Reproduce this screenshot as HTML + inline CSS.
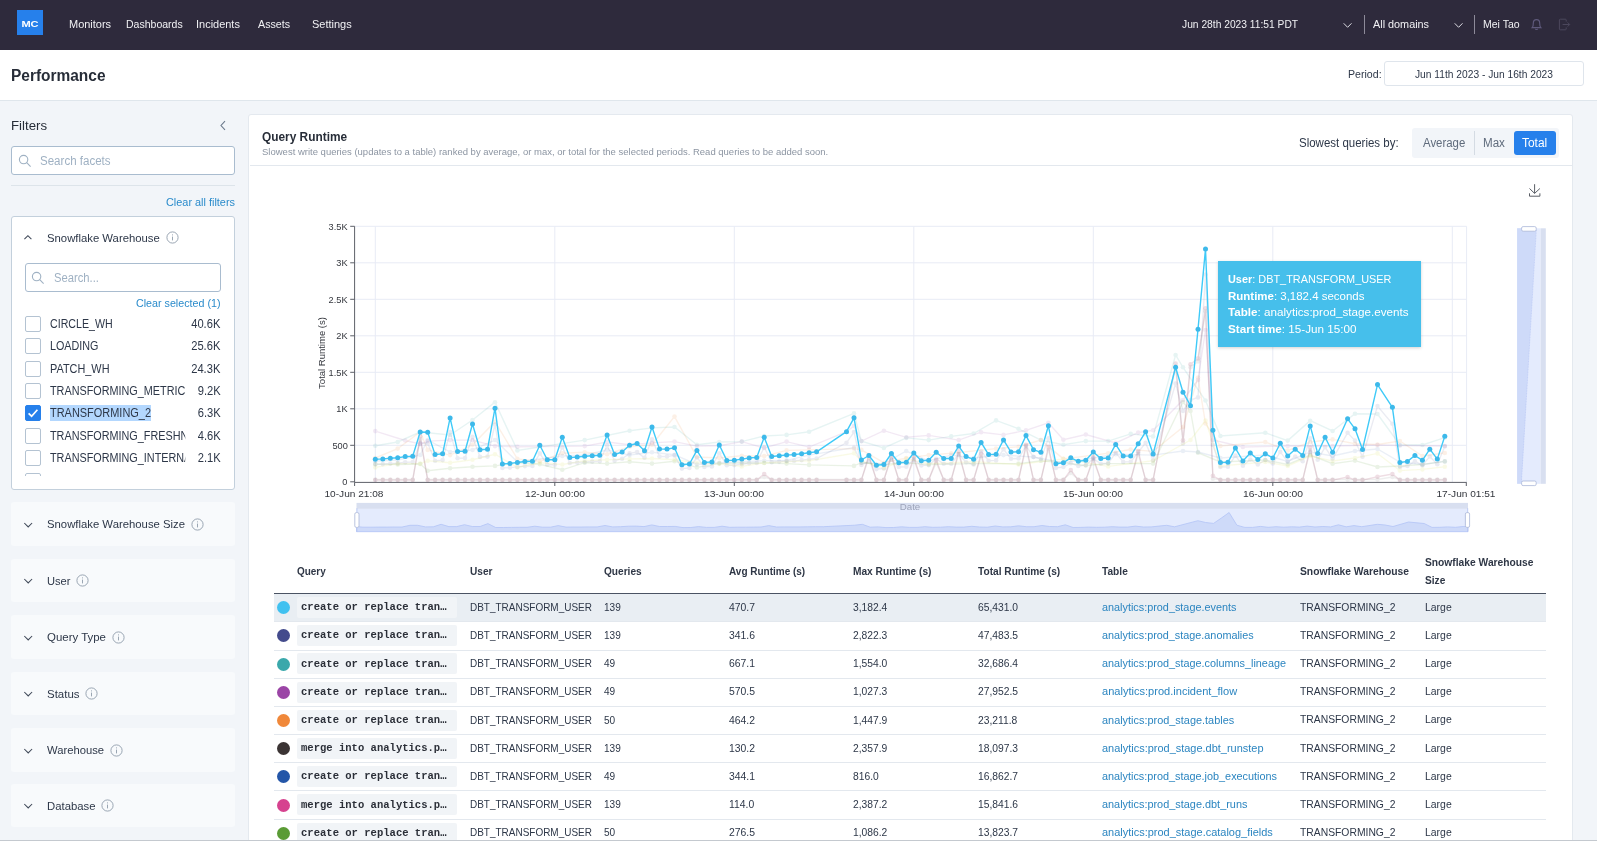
<!DOCTYPE html>
<html><head><meta charset="utf-8"><title>Performance</title>
<style>
*{box-sizing:border-box;margin:0;padding:0}
html,body{width:1597px;height:846px;overflow:hidden;background:#fff;font-family:"Liberation Sans",sans-serif;color:#2d3748}
.abs{position:absolute}
#app{filter:opacity(1);position:absolute;left:0;top:0;width:1597px;height:840.5px;overflow:hidden;background:#f2f5f9;border-bottom:1px solid #c4c9cf}
#nav{position:absolute;left:0;top:0;width:1597px;height:50px;background:#2e2a3c}
#logo{position:absolute;left:17px;top:10px;width:26px;height:25px;background:#2680eb}
#hdr{position:absolute;left:0;top:50px;width:1597px;height:51px;background:#fff;border-bottom:1px solid #dfe6ec}
#side{position:absolute;left:0;top:101px;width:248px;height:739px}
#card{position:absolute;left:248px;top:114px;width:1324.5px;height:740px;background:#fff;border:1px solid #e4e9ef;border-radius:3px}
.t{position:absolute;white-space:nowrap;transform-origin:0 50%}
.t.r{transform-origin:100% 50%}
.t.c{transform-origin:50% 50%}
.b{font-weight:bold}
.inp{position:absolute;background:#fff;border:1px solid #a9bccf;border-radius:3px}
.fc{position:absolute;left:11px;width:224px;height:44px;background:#f8fafc;border-radius:3px}
.cb{position:absolute;left:25px;width:16px;height:16px;background:#fff;border:1px solid #b4c3d2;border-radius:2px}
.clip{position:absolute;overflow:hidden}
.mono{font-family:"Liberation Mono",monospace;font-weight:bold}
.row{position:absolute;left:274px;width:1272px;border-bottom:1px solid #e3e8ee}
.code{position:absolute;left:297px;width:160px;height:21px;background:#f1f4f7;border-radius:2px}
.dot{position:absolute;left:277px;width:13px;height:13px;border-radius:50%}
</style></head><body>
<div id="app">
<div id="nav"></div><div id="logo"></div>
<div class="t c b" style="left: -469.7px; width: 1000px; text-align: center; top: 16.57px; font-size: 9.6px; line-height: 13px; color: rgb(255, 255, 255); transform: scaleX(1.1527);">MC</div>
<div class="t " style="left: 69.4px; top: 16.69px; font-size: 11px; line-height: 15px; color: rgb(241, 241, 244); transform: scaleX(0.9979);">Monitors</div>
<div class="t " style="left: 125.5px; top: 16.69px; font-size: 11px; line-height: 15px; color: rgb(241, 241, 244); transform: scaleX(0.9557);">Dashboards</div>
<div class="t " style="left: 195.5px; top: 16.69px; font-size: 11px; line-height: 15px; color: rgb(241, 241, 244); transform: scaleX(0.997);">Incidents</div>
<div class="t " style="left: 258.4px; top: 16.69px; font-size: 11px; line-height: 15px; color: rgb(241, 241, 244); transform: scaleX(0.9723);">Assets</div>
<div class="t " style="left: 311.5px; top: 16.69px; font-size: 11px; line-height: 15px; color: rgb(241, 241, 244); transform: scaleX(0.9987);">Settings</div>
<div class="t " style="left: 1181.5px; top: 16.69px; font-size: 11px; line-height: 15px; color: rgb(241, 241, 244); transform: scaleX(0.9321);">Jun 28th 2023 11:51 PDT</div>
<div class="t " style="left: 1373px; top: 16.69px; font-size: 11px; line-height: 15px; color: rgb(241, 241, 244); transform: scaleX(0.9849);">All domains</div>
<div class="t " style="left: 1483.4px; top: 16.69px; font-size: 11px; line-height: 15px; color: rgb(241, 241, 244); transform: scaleX(0.9549);">Mei Tao</div>
<svg class="abs" style="left:1342px;top:20px" width="11" height="9" viewBox="0 0 11 9"><path d="M1.7 3.3 L5.6 7.3 L9.5 3.3" fill="none" stroke="#dcdce3" stroke-width="1"></path></svg>
<svg class="abs" style="left:1453px;top:20px" width="11" height="9" viewBox="0 0 11 9"><path d="M1.7 3.3 L5.6 7.3 L9.5 3.3" fill="none" stroke="#dcdce3" stroke-width="1"></path></svg>
<div class="abs" style="left:1364px;top:15px;width:1px;height:19px;background:#8d8a99"></div>
<div class="abs" style="left:1474px;top:15px;width:1px;height:19px;background:#8d8a99"></div>
<svg class="abs" style="left:1531px;top:18px" width="11" height="13" viewBox="0 0 11 13"><path d="M1.2 9.6 C2.3 8.6 2.3 7.4 2.3 5.2 C2.3 3 3.6 1.6 5.5 1.6 C7.4 1.6 8.7 3 8.7 5.2 C8.7 7.4 8.7 8.6 9.8 9.6 Z M4.3 10.9 C4.6 11.7 6.4 11.7 6.7 10.9" fill="none" stroke="#5f5a7c" stroke-width="1.15"></path></svg>
<svg class="abs" style="left:1558px;top:18px" width="13" height="13" viewBox="0 0 13 13"><path d="M8.2 3.6 V2 C8.2 1.5 7.9 1.2 7.4 1.2 H2.2 C1.7 1.2 1.4 1.5 1.4 2 V11 C1.4 11.5 1.7 11.8 2.2 11.8 H7.4 C7.9 11.8 8.2 11.5 8.2 11 V9.4 M4.6 6.5 H11.6 M9.6 4.4 L11.7 6.5 L9.6 8.6" fill="none" stroke="#4b475c" stroke-width="1"></path></svg>
<div id="hdr"></div>
<div class="t b" style="left: 11px; top: 65.06px; font-size: 16px; line-height: 22px; color: rgb(39, 45, 56); transform: scaleX(0.966);">Performance</div>
<div class="t " style="left: 1347.6px; top: 66.96px; font-size: 10.5px; line-height: 15px; color: rgb(45, 55, 72); transform: scaleX(1.0096);">Period:</div>
<div class="inp" style="left:1384px;top:61px;width:200px;height:25px;border-color:#dfe5ec"></div>
<div class="t " style="left: 1415px; top: 66.96px; font-size: 10.5px; line-height: 15px; color: rgb(45, 55, 72); transform: scaleX(0.9741);">Jun 11th 2023 - Jun 16th 2023</div>
<div id="side"></div>
<div class="t " style="left: 11px; top: 116.5px; font-size: 13px; line-height: 18px; color: rgb(39, 45, 56); transform: scaleX(1.0172);">Filters</div>
<svg class="abs" style="left:219px;top:120px" width="8" height="11" viewBox="0 0 8 11"><path d="M6 1.2 L2 5.5 L6 9.8" fill="none" stroke="#6b7a8c" stroke-width="1.1"></path></svg>
<div class="inp" style="left:11px;top:146px;width:224px;height:29px"></div>
<svg class="abs" style="left:18px;top:154px" width="14" height="14" viewBox="0 0 14 14"><circle cx="5.6" cy="5.6" r="4.2" fill="none" stroke="#9fb1c3" stroke-width="1.1"></circle><path d="M8.7 8.7 L12.6 12.6" stroke="#9fb1c3" stroke-width="1.1"></path></svg>
<div class="t " style="left: 40.4px; top: 152.94px; font-size: 12px; line-height: 17px; color: rgb(159, 177, 195); transform: scaleX(0.9622);">Search facets</div>
<div class="abs" style="left:11px;top:185px;width:224px;height:1px;background:#dde4ea"></div>
<div class="t " style="left: 165.5px; top: 195.29px; font-size: 11px; line-height: 15px; color: rgb(42, 139, 203); transform: scaleX(0.9901);">Clear all filters</div>
<div class="abs" style="left:11px;top:216px;width:224px;height:274px;background:#fff;border:1px solid #c3d0dc;border-radius:3px"></div>
<svg class="abs" style="left:23px;top:234px" width="10" height="7" viewBox="0 0 10 7"><path d="M1.4 5.2 L4.9 1.7 L8.4 5.2" fill="none" stroke="#3f4858" stroke-width="1.05"></path></svg>
<div class="t " style="left: 47.2px; top: 230.02px; font-size: 11.5px; line-height: 16px; color: rgb(45, 55, 72); transform: scaleX(0.9839);">Snowflake Warehouse</div>
<svg class="abs" style="left:165.8px;top:231.4px" width="13" height="13" viewBox="0 0 13 13"><circle cx="6.5" cy="6.5" r="5.6" fill="none" stroke="#8f9caa" stroke-width="0.9"></circle><path d="M6.5 5.6 V9.4 M6.5 3.4 V4.4" stroke="#8f9caa" stroke-width="0.9"></path></svg>
<div class="inp" style="left:25px;top:263px;width:196px;height:29px"></div>
<svg class="abs" style="left:31px;top:271px" width="14" height="14" viewBox="0 0 14 14"><circle cx="5.6" cy="5.6" r="4.2" fill="none" stroke="#9fb1c3" stroke-width="1.1"></circle><path d="M8.7 8.7 L12.6 12.6" stroke="#9fb1c3" stroke-width="1.1"></path></svg>
<div class="t " style="left: 54.4px; top: 269.94px; font-size: 12px; line-height: 17px; color: rgb(159, 177, 195); transform: scaleX(0.9369);">Search...</div>
<div class="t " style="left: 135.7px; top: 295.69px; font-size: 11px; line-height: 15px; color: rgb(42, 139, 203); transform: scaleX(0.9732);">Clear selected (1)</div>
<div class="cb" style="top:316px"></div>
<div class="t " style="left: 50.3px; top: 316.34px; font-size: 12px; line-height: 17px; color: rgb(45, 55, 72); transform: scaleX(0.8856); width: 152.66px; overflow: hidden;">CIRCLE_WH</div>
<div class="t r " style="right: 1376.3px; top: 316.34px; font-size: 12px; line-height: 17px; color: rgb(45, 55, 72); transform: scaleX(0.93);">40.6K</div>
<div class="cb" style="top:338px"></div>
<div class="t " style="left: 50.3px; top: 338.34px; font-size: 12px; line-height: 17px; color: rgb(45, 55, 72); transform: scaleX(0.896); width: 150.89px; overflow: hidden;">LOADING</div>
<div class="t r " style="right: 1376.3px; top: 338.34px; font-size: 12px; line-height: 17px; color: rgb(45, 55, 72); transform: scaleX(0.93);">25.6K</div>
<div class="cb" style="top:361px"></div>
<div class="t " style="left: 50.3px; top: 361.34px; font-size: 12px; line-height: 17px; color: rgb(45, 55, 72); transform: scaleX(0.9075); width: 148.98px; overflow: hidden;">PATCH_WH</div>
<div class="t r " style="right: 1376.3px; top: 361.34px; font-size: 12px; line-height: 17px; color: rgb(45, 55, 72); transform: scaleX(0.93);">24.3K</div>
<div class="cb" style="top:383px"></div>
<div class="t " style="left: 50.3px; top: 383.34px; font-size: 12px; line-height: 17px; color: rgb(45, 55, 72); transform: scaleX(0.902); width: 149.89px; overflow: hidden;">TRANSFORMING_METRICS</div>
<div class="t r " style="right: 1376.3px; top: 383.34px; font-size: 12px; line-height: 17px; color: rgb(45, 55, 72); transform: scaleX(0.93);">9.2K</div>
<div class="cb" style="top:405px;background:#2680eb;border-color:#2680eb"></div><svg class="abs" style="left:25px;top:405px" width="16" height="16" viewBox="0 0 16 16"><path d="M3.6 8.3 L6.6 11.2 L12.4 4.8" fill="none" stroke="#fff" stroke-width="1.7"></path></svg>
<div class="abs" style="left:50px;top:405.2px;width:101px;height:15.5px;background:#b3d7fe"></div>
<div class="t " style="left: 50.3px; top: 405.34px; font-size: 12px; line-height: 17px; color: rgb(45, 55, 72); transform: scaleX(0.9125); width: 148.16px; overflow: hidden;">TRANSFORMING_2</div>
<div class="t r " style="right: 1376.3px; top: 405.34px; font-size: 12px; line-height: 17px; color: rgb(45, 55, 72); transform: scaleX(0.93);">6.3K</div>
<div class="cb" style="top:428px"></div>
<div class="t " style="left: 50.3px; top: 428.34px; font-size: 12px; line-height: 17px; color: rgb(45, 55, 72); transform: scaleX(0.902); width: 149.89px; overflow: hidden;">TRANSFORMING_FRESHNESS</div>
<div class="t r " style="right: 1376.3px; top: 428.34px; font-size: 12px; line-height: 17px; color: rgb(45, 55, 72); transform: scaleX(0.93);">4.6K</div>
<div class="cb" style="top:450px"></div>
<div class="t " style="left: 50.3px; top: 450.34px; font-size: 12px; line-height: 17px; color: rgb(45, 55, 72); transform: scaleX(0.902); width: 149.89px; overflow: hidden;">TRANSFORMING_INTERNAL</div>
<div class="t r " style="right: 1376.3px; top: 450.34px; font-size: 12px; line-height: 17px; color: rgb(45, 55, 72); transform: scaleX(0.93);">2.1K</div>
<div class="clip" style="left:25px;top:473px;width:16px;height:3.3px"><div class="cb" style="left:0;top:0"></div></div>
<div class="fc" style="top:502px;height:44px"></div>
<svg class="abs" style="left:22.5px;top:520.7px" width="11" height="8" viewBox="0 0 11 8"><path d="M1.3 2 L5.2 5.9 L9.1 2" fill="none" stroke="#3f4858" stroke-width="1.05"></path></svg>
<div class="t " style="left: 47.1px; top: 516.22px; font-size: 11.5px; line-height: 16px; color: rgb(45, 55, 72); transform: scaleX(0.9843);">Snowflake Warehouse Size</div>
<svg class="abs" style="left:190.6px;top:517.5px" width="13" height="13" viewBox="0 0 13 13"><circle cx="6.5" cy="6.5" r="5.6" fill="none" stroke="#8f9caa" stroke-width="0.9"></circle><path d="M6.5 5.6 V9.4 M6.5 3.4 V4.4" stroke="#8f9caa" stroke-width="0.9"></path></svg>
<div class="fc" style="top:559px;height:43px"></div>
<svg class="abs" style="left:22.5px;top:577.2px" width="11" height="8" viewBox="0 0 11 8"><path d="M1.3 2 L5.2 5.9 L9.1 2" fill="none" stroke="#3f4858" stroke-width="1.05"></path></svg>
<div class="t " style="left: 47.1px; top: 572.72px; font-size: 11.5px; line-height: 16px; color: rgb(45, 55, 72); transform: scaleX(0.9678);">User</div>
<svg class="abs" style="left:76.1px;top:574.0px" width="13" height="13" viewBox="0 0 13 13"><circle cx="6.5" cy="6.5" r="5.6" fill="none" stroke="#8f9caa" stroke-width="0.9"></circle><path d="M6.5 5.6 V9.4 M6.5 3.4 V4.4" stroke="#8f9caa" stroke-width="0.9"></path></svg>
<div class="fc" style="top:615px;height:44px"></div>
<svg class="abs" style="left:22.5px;top:633.7px" width="11" height="8" viewBox="0 0 11 8"><path d="M1.3 2 L5.2 5.9 L9.1 2" fill="none" stroke="#3f4858" stroke-width="1.05"></path></svg>
<div class="t " style="left: 47.1px; top: 629.22px; font-size: 11.5px; line-height: 16px; color: rgb(45, 55, 72); transform: scaleX(0.9958);">Query Type</div>
<svg class="abs" style="left:111.6px;top:630.5px" width="13" height="13" viewBox="0 0 13 13"><circle cx="6.5" cy="6.5" r="5.6" fill="none" stroke="#8f9caa" stroke-width="0.9"></circle><path d="M6.5 5.6 V9.4 M6.5 3.4 V4.4" stroke="#8f9caa" stroke-width="0.9"></path></svg>
<div class="fc" style="top:672px;height:43px"></div>
<svg class="abs" style="left:22.5px;top:690.2px" width="11" height="8" viewBox="0 0 11 8"><path d="M1.3 2 L5.2 5.9 L9.1 2" fill="none" stroke="#3f4858" stroke-width="1.05"></path></svg>
<div class="t " style="left: 47.1px; top: 685.72px; font-size: 11.5px; line-height: 16px; color: rgb(45, 55, 72); transform: scaleX(0.9966);">Status</div>
<svg class="abs" style="left:85.1px;top:687.0px" width="13" height="13" viewBox="0 0 13 13"><circle cx="6.5" cy="6.5" r="5.6" fill="none" stroke="#8f9caa" stroke-width="0.9"></circle><path d="M6.5 5.6 V9.4 M6.5 3.4 V4.4" stroke="#8f9caa" stroke-width="0.9"></path></svg>
<div class="fc" style="top:728px;height:44px"></div>
<svg class="abs" style="left:22.5px;top:746.7px" width="11" height="8" viewBox="0 0 11 8"><path d="M1.3 2 L5.2 5.9 L9.1 2" fill="none" stroke="#3f4858" stroke-width="1.05"></path></svg>
<div class="t " style="left: 47.1px; top: 742.22px; font-size: 11.5px; line-height: 16px; color: rgb(45, 55, 72); transform: scaleX(0.9762);">Warehouse</div>
<svg class="abs" style="left:109.6px;top:743.5px" width="13" height="13" viewBox="0 0 13 13"><circle cx="6.5" cy="6.5" r="5.6" fill="none" stroke="#8f9caa" stroke-width="0.9"></circle><path d="M6.5 5.6 V9.4 M6.5 3.4 V4.4" stroke="#8f9caa" stroke-width="0.9"></path></svg>
<div class="fc" style="top:784px;height:43px"></div>
<svg class="abs" style="left:22.5px;top:802.2px" width="11" height="8" viewBox="0 0 11 8"><path d="M1.3 2 L5.2 5.9 L9.1 2" fill="none" stroke="#3f4858" stroke-width="1.05"></path></svg>
<div class="t " style="left: 47.1px; top: 797.72px; font-size: 11.5px; line-height: 16px; color: rgb(45, 55, 72); transform: scaleX(0.9851);">Database</div>
<svg class="abs" style="left:101.1px;top:799.0px" width="13" height="13" viewBox="0 0 13 13"><circle cx="6.5" cy="6.5" r="5.6" fill="none" stroke="#8f9caa" stroke-width="0.9"></circle><path d="M6.5 5.6 V9.4 M6.5 3.4 V4.4" stroke="#8f9caa" stroke-width="0.9"></path></svg>
<div id="card"></div>
<div class="t b" style="left: 262px; top: 127.97px; font-size: 12.5px; line-height: 18px; color: rgb(39, 45, 56); transform: scaleX(0.9497);">Query Runtime</div>
<div class="t " style="left: 262px; top: 145.88px; font-size: 9px; line-height: 13px; color: rgb(140, 149, 162); transform: scaleX(1.0557);">Slowest write queries (updates to a table) ranked by average, or max, or total for the selected periods. Read queries to be added soon.</div>
<div class="abs" style="left:250px;top:165px;width:1322px;height:1px;background:#e3e8ee"></div>
<div class="t " style="left: 1298.9px; top: 134.54px; font-size: 12px; line-height: 17px; color: rgb(45, 55, 72); transform: scaleX(0.9571);">Slowest queries by:</div>
<div class="abs" style="left:1412px;top:128px;width:146.5px;height:29.5px;background:#f2f5f9;border-radius:3px"></div>
<div class="t " style="left: 1423.4px; top: 134.54px; font-size: 12px; line-height: 17px; color: rgb(95, 107, 124); transform: scaleX(0.9509);">Average</div>
<div class="abs" style="left:1474.3px;top:131px;width:1px;height:23.5px;background:#d4dbe3"></div>
<div class="t " style="left: 1483px; top: 134.54px; font-size: 12px; line-height: 17px; color: rgb(95, 107, 124); transform: scaleX(0.966);">Max</div>
<div class="abs" style="left:1513.5px;top:131px;width:42px;height:23.8px;background:#2680eb;border-radius:3px"></div>
<div class="t " style="left: 1522.4px; top: 134.54px; font-size: 12px; line-height: 17px; color: rgb(255, 255, 255); transform: scaleX(0.9937);">Total</div>
<svg class="abs" style="left:1527px;top:183px" width="15" height="15" viewBox="0 0 15 15"><path d="M7.6 1.2 V10.2 M2.5 5.5 L7.6 10.4 L12.9 5.5 M2.5 10.3 V13.2 H12.9 V10.3" fill="none" stroke="#5a5e66" stroke-width="1"></path></svg>
<svg class="abs" style="left:0;top:0" width="1597" height="840" viewBox="0 0 1597 840"><path d="M354.6 226.3 H1466.6" stroke="#e8ecf6" stroke-width="1"></path><path d="M354.6 262.8 H1466.6" stroke="#e8ecf6" stroke-width="1"></path><path d="M354.6 299.3 H1466.6" stroke="#e8ecf6" stroke-width="1"></path><path d="M354.6 335.8 H1466.6" stroke="#e8ecf6" stroke-width="1"></path><path d="M354.6 372.3 H1466.6" stroke="#e8ecf6" stroke-width="1"></path><path d="M354.6 408.8 H1466.6" stroke="#e8ecf6" stroke-width="1"></path><path d="M354.6 445.3 H1466.6" stroke="#e8ecf6" stroke-width="1"></path><path d="M375.3 226.3 V482" stroke="#e8ecf6" stroke-width="1"></path><path d="M554.8 226.3 V482" stroke="#e8ecf6" stroke-width="1"></path><path d="M734.3 226.3 V482" stroke="#e8ecf6" stroke-width="1"></path><path d="M913.8 226.3 V482" stroke="#e8ecf6" stroke-width="1"></path><path d="M1093.3 226.3 V482" stroke="#e8ecf6" stroke-width="1"></path><path d="M1272.8 226.3 V482" stroke="#e8ecf6" stroke-width="1"></path><path d="M1452.3 226.3 V482" stroke="#e8ecf6" stroke-width="1"></path><path d="M1466.6 226.3 V482" stroke="#e8ecf6" stroke-width="1"></path><g opacity="0.16"><path d="M375.3 480.1 L382.8 480.1 L390.3 480.1 L397.7 480.1 L405.2 480.1 L412.7 480.1 L420.2 436.4 L427.7 480.1 L435.1 480.1 L442.6 480.1 L450.1 480.1 L457.6 480.1 L465.0 480.1 L472.5 480.1 L480.0 480.1 L487.5 480.1 L495.0 480.1 L502.4 480.1 L509.9 480.1 L517.4 480.1 L524.9 480.1 L532.4 480.1 L539.8 480.1 L547.3 480.1 L554.8 480.1 L562.3 480.1 L569.8 480.1 L577.2 480.1 L584.7 480.1 L592.2 480.1 L599.7 480.1 L607.1 480.1 L614.6 480.1 L622.1 480.1 L629.6 480.1 L637.1 480.1 L644.5 480.1 L652.0 480.1 L659.5 480.1 L667.0 480.1 L674.5 480.1 L681.9 480.1 L689.4 480.1 L696.9 480.1 L704.4 480.1 L711.9 480.1 L719.3 480.1 L726.8 480.1 L734.3 480.1 L741.8 480.1 L749.2 480.1 L756.7 480.1 L764.2 474.0 L771.7 480.1 L779.2 480.1 L786.6 480.1 L794.1 480.1 L801.6 480.1 L809.1 480.1 L816.6 480.1 L846.5 480.1 L854.0 480.1 L861.4 480.1 L868.9 455.0 L876.4 480.1 L883.9 480.1 L891.4 455.0 L898.8 480.1 L906.3 480.1 L913.8 457.0 L921.3 480.1 L928.7 480.1 L936.2 460.0 L943.7 480.1 L951.2 480.1 L958.7 451.4 L966.1 480.1 L973.6 480.1 L981.1 453.6 L988.6 480.1 L996.1 480.1 L1003.5 480.1 L1011.0 480.1 L1018.5 480.1 L1026.0 444.8 L1033.5 480.1 L1040.9 480.1 L1048.4 446.7 L1055.9 480.1 L1063.4 480.1 L1070.8 470.0 L1078.3 480.1 L1085.8 480.1 L1093.3 457.4 L1100.8 480.1 L1108.2 480.1 L1115.7 480.1 L1123.2 480.1 L1130.7 480.1 L1138.2 451.0 L1145.6 480.1 L1153.1 480.1 L1175.6 363.6 L1183.0 440.4 L1190.5 364.3 L1198.0 358.4 L1205.5 308.3 L1212.9 475.8 L1220.4 480.1 L1227.9 480.1 L1235.4 480.1 L1242.9 480.1 L1250.3 480.1 L1257.8 480.1 L1265.3 480.1 L1272.8 480.1 L1280.3 480.1 L1287.7 480.1 L1295.2 480.1 L1302.7 480.1 L1310.2 447.6 L1317.7 480.1 L1325.1 480.1 L1332.6 480.1 L1347.6 477.0 L1355.0 480.1 L1362.5 480.1 L1377.5 476.7 L1392.4 474.0 L1399.9 480.1 L1407.4 480.1 L1414.9 480.1 L1422.4 480.1 L1429.8 480.1 L1437.3 480.1 L1444.8 480.1" fill="none" stroke="#a0365f" stroke-width="1.4"></path><circle cx="375.3" cy="480.1" r="2.3" fill="#a0365f"></circle><circle cx="382.8" cy="480.1" r="2.3" fill="#a0365f"></circle><circle cx="390.3" cy="480.1" r="2.3" fill="#a0365f"></circle><circle cx="397.7" cy="480.1" r="2.3" fill="#a0365f"></circle><circle cx="405.2" cy="480.1" r="2.3" fill="#a0365f"></circle><circle cx="412.7" cy="480.1" r="2.3" fill="#a0365f"></circle><circle cx="420.2" cy="436.4" r="2.3" fill="#a0365f"></circle><circle cx="427.7" cy="480.1" r="2.3" fill="#a0365f"></circle><circle cx="435.1" cy="480.1" r="2.3" fill="#a0365f"></circle><circle cx="442.6" cy="480.1" r="2.3" fill="#a0365f"></circle><circle cx="450.1" cy="480.1" r="2.3" fill="#a0365f"></circle><circle cx="457.6" cy="480.1" r="2.3" fill="#a0365f"></circle><circle cx="465.0" cy="480.1" r="2.3" fill="#a0365f"></circle><circle cx="472.5" cy="480.1" r="2.3" fill="#a0365f"></circle><circle cx="480.0" cy="480.1" r="2.3" fill="#a0365f"></circle><circle cx="487.5" cy="480.1" r="2.3" fill="#a0365f"></circle><circle cx="495.0" cy="480.1" r="2.3" fill="#a0365f"></circle><circle cx="502.4" cy="480.1" r="2.3" fill="#a0365f"></circle><circle cx="509.9" cy="480.1" r="2.3" fill="#a0365f"></circle><circle cx="517.4" cy="480.1" r="2.3" fill="#a0365f"></circle><circle cx="524.9" cy="480.1" r="2.3" fill="#a0365f"></circle><circle cx="532.4" cy="480.1" r="2.3" fill="#a0365f"></circle><circle cx="539.8" cy="480.1" r="2.3" fill="#a0365f"></circle><circle cx="547.3" cy="480.1" r="2.3" fill="#a0365f"></circle><circle cx="554.8" cy="480.1" r="2.3" fill="#a0365f"></circle><circle cx="562.3" cy="480.1" r="2.3" fill="#a0365f"></circle><circle cx="569.8" cy="480.1" r="2.3" fill="#a0365f"></circle><circle cx="577.2" cy="480.1" r="2.3" fill="#a0365f"></circle><circle cx="584.7" cy="480.1" r="2.3" fill="#a0365f"></circle><circle cx="592.2" cy="480.1" r="2.3" fill="#a0365f"></circle><circle cx="599.7" cy="480.1" r="2.3" fill="#a0365f"></circle><circle cx="607.1" cy="480.1" r="2.3" fill="#a0365f"></circle><circle cx="614.6" cy="480.1" r="2.3" fill="#a0365f"></circle><circle cx="622.1" cy="480.1" r="2.3" fill="#a0365f"></circle><circle cx="629.6" cy="480.1" r="2.3" fill="#a0365f"></circle><circle cx="637.1" cy="480.1" r="2.3" fill="#a0365f"></circle><circle cx="644.5" cy="480.1" r="2.3" fill="#a0365f"></circle><circle cx="652.0" cy="480.1" r="2.3" fill="#a0365f"></circle><circle cx="659.5" cy="480.1" r="2.3" fill="#a0365f"></circle><circle cx="667.0" cy="480.1" r="2.3" fill="#a0365f"></circle><circle cx="674.5" cy="480.1" r="2.3" fill="#a0365f"></circle><circle cx="681.9" cy="480.1" r="2.3" fill="#a0365f"></circle><circle cx="689.4" cy="480.1" r="2.3" fill="#a0365f"></circle><circle cx="696.9" cy="480.1" r="2.3" fill="#a0365f"></circle><circle cx="704.4" cy="480.1" r="2.3" fill="#a0365f"></circle><circle cx="711.9" cy="480.1" r="2.3" fill="#a0365f"></circle><circle cx="719.3" cy="480.1" r="2.3" fill="#a0365f"></circle><circle cx="726.8" cy="480.1" r="2.3" fill="#a0365f"></circle><circle cx="734.3" cy="480.1" r="2.3" fill="#a0365f"></circle><circle cx="741.8" cy="480.1" r="2.3" fill="#a0365f"></circle><circle cx="749.2" cy="480.1" r="2.3" fill="#a0365f"></circle><circle cx="756.7" cy="480.1" r="2.3" fill="#a0365f"></circle><circle cx="764.2" cy="474.0" r="2.3" fill="#a0365f"></circle><circle cx="771.7" cy="480.1" r="2.3" fill="#a0365f"></circle><circle cx="779.2" cy="480.1" r="2.3" fill="#a0365f"></circle><circle cx="786.6" cy="480.1" r="2.3" fill="#a0365f"></circle><circle cx="794.1" cy="480.1" r="2.3" fill="#a0365f"></circle><circle cx="801.6" cy="480.1" r="2.3" fill="#a0365f"></circle><circle cx="809.1" cy="480.1" r="2.3" fill="#a0365f"></circle><circle cx="816.6" cy="480.1" r="2.3" fill="#a0365f"></circle><circle cx="846.5" cy="480.1" r="2.3" fill="#a0365f"></circle><circle cx="854.0" cy="480.1" r="2.3" fill="#a0365f"></circle><circle cx="861.4" cy="480.1" r="2.3" fill="#a0365f"></circle><circle cx="868.9" cy="455.0" r="2.3" fill="#a0365f"></circle><circle cx="876.4" cy="480.1" r="2.3" fill="#a0365f"></circle><circle cx="883.9" cy="480.1" r="2.3" fill="#a0365f"></circle><circle cx="891.4" cy="455.0" r="2.3" fill="#a0365f"></circle><circle cx="898.8" cy="480.1" r="2.3" fill="#a0365f"></circle><circle cx="906.3" cy="480.1" r="2.3" fill="#a0365f"></circle><circle cx="913.8" cy="457.0" r="2.3" fill="#a0365f"></circle><circle cx="921.3" cy="480.1" r="2.3" fill="#a0365f"></circle><circle cx="928.7" cy="480.1" r="2.3" fill="#a0365f"></circle><circle cx="936.2" cy="460.0" r="2.3" fill="#a0365f"></circle><circle cx="943.7" cy="480.1" r="2.3" fill="#a0365f"></circle><circle cx="951.2" cy="480.1" r="2.3" fill="#a0365f"></circle><circle cx="958.7" cy="451.4" r="2.3" fill="#a0365f"></circle><circle cx="966.1" cy="480.1" r="2.3" fill="#a0365f"></circle><circle cx="973.6" cy="480.1" r="2.3" fill="#a0365f"></circle><circle cx="981.1" cy="453.6" r="2.3" fill="#a0365f"></circle><circle cx="988.6" cy="480.1" r="2.3" fill="#a0365f"></circle><circle cx="996.1" cy="480.1" r="2.3" fill="#a0365f"></circle><circle cx="1003.5" cy="480.1" r="2.3" fill="#a0365f"></circle><circle cx="1011.0" cy="480.1" r="2.3" fill="#a0365f"></circle><circle cx="1018.5" cy="480.1" r="2.3" fill="#a0365f"></circle><circle cx="1026.0" cy="444.8" r="2.3" fill="#a0365f"></circle><circle cx="1033.5" cy="480.1" r="2.3" fill="#a0365f"></circle><circle cx="1040.9" cy="480.1" r="2.3" fill="#a0365f"></circle><circle cx="1048.4" cy="446.7" r="2.3" fill="#a0365f"></circle><circle cx="1055.9" cy="480.1" r="2.3" fill="#a0365f"></circle><circle cx="1063.4" cy="480.1" r="2.3" fill="#a0365f"></circle><circle cx="1070.8" cy="470.0" r="2.3" fill="#a0365f"></circle><circle cx="1078.3" cy="480.1" r="2.3" fill="#a0365f"></circle><circle cx="1085.8" cy="480.1" r="2.3" fill="#a0365f"></circle><circle cx="1093.3" cy="457.4" r="2.3" fill="#a0365f"></circle><circle cx="1100.8" cy="480.1" r="2.3" fill="#a0365f"></circle><circle cx="1108.2" cy="480.1" r="2.3" fill="#a0365f"></circle><circle cx="1115.7" cy="480.1" r="2.3" fill="#a0365f"></circle><circle cx="1123.2" cy="480.1" r="2.3" fill="#a0365f"></circle><circle cx="1130.7" cy="480.1" r="2.3" fill="#a0365f"></circle><circle cx="1138.2" cy="451.0" r="2.3" fill="#a0365f"></circle><circle cx="1145.6" cy="480.1" r="2.3" fill="#a0365f"></circle><circle cx="1153.1" cy="480.1" r="2.3" fill="#a0365f"></circle><circle cx="1175.6" cy="363.6" r="2.3" fill="#a0365f"></circle><circle cx="1183.0" cy="440.4" r="2.3" fill="#a0365f"></circle><circle cx="1190.5" cy="364.3" r="2.3" fill="#a0365f"></circle><circle cx="1198.0" cy="358.4" r="2.3" fill="#a0365f"></circle><circle cx="1205.5" cy="308.3" r="2.3" fill="#a0365f"></circle><circle cx="1212.9" cy="475.8" r="2.3" fill="#a0365f"></circle><circle cx="1220.4" cy="480.1" r="2.3" fill="#a0365f"></circle><circle cx="1227.9" cy="480.1" r="2.3" fill="#a0365f"></circle><circle cx="1235.4" cy="480.1" r="2.3" fill="#a0365f"></circle><circle cx="1242.9" cy="480.1" r="2.3" fill="#a0365f"></circle><circle cx="1250.3" cy="480.1" r="2.3" fill="#a0365f"></circle><circle cx="1257.8" cy="480.1" r="2.3" fill="#a0365f"></circle><circle cx="1265.3" cy="480.1" r="2.3" fill="#a0365f"></circle><circle cx="1272.8" cy="480.1" r="2.3" fill="#a0365f"></circle><circle cx="1280.3" cy="480.1" r="2.3" fill="#a0365f"></circle><circle cx="1287.7" cy="480.1" r="2.3" fill="#a0365f"></circle><circle cx="1295.2" cy="480.1" r="2.3" fill="#a0365f"></circle><circle cx="1302.7" cy="480.1" r="2.3" fill="#a0365f"></circle><circle cx="1310.2" cy="447.6" r="2.3" fill="#a0365f"></circle><circle cx="1317.7" cy="480.1" r="2.3" fill="#a0365f"></circle><circle cx="1325.1" cy="480.1" r="2.3" fill="#a0365f"></circle><circle cx="1332.6" cy="480.1" r="2.3" fill="#a0365f"></circle><circle cx="1347.6" cy="477.0" r="2.3" fill="#a0365f"></circle><circle cx="1355.0" cy="480.1" r="2.3" fill="#a0365f"></circle><circle cx="1362.5" cy="480.1" r="2.3" fill="#a0365f"></circle><circle cx="1377.5" cy="476.7" r="2.3" fill="#a0365f"></circle><circle cx="1392.4" cy="474.0" r="2.3" fill="#a0365f"></circle><circle cx="1399.9" cy="480.1" r="2.3" fill="#a0365f"></circle><circle cx="1407.4" cy="480.1" r="2.3" fill="#a0365f"></circle><circle cx="1414.9" cy="480.1" r="2.3" fill="#a0365f"></circle><circle cx="1422.4" cy="480.1" r="2.3" fill="#a0365f"></circle><circle cx="1429.8" cy="480.1" r="2.3" fill="#a0365f"></circle><circle cx="1437.3" cy="480.1" r="2.3" fill="#a0365f"></circle><circle cx="1444.8" cy="480.1" r="2.3" fill="#a0365f"></circle></g><g opacity="0.08"><path d="M375.3 479.5 L382.8 479.5 L390.3 479.5 L397.7 479.5 L405.2 479.5 L412.7 479.5 L420.2 439.4 L427.7 479.5 L435.1 479.5 L442.6 479.5 L450.1 479.5 L457.6 479.5 L465.0 479.5 L472.5 479.5 L480.0 479.5 L487.5 479.5 L495.0 479.5 L502.4 479.5 L509.9 479.5 L517.4 479.5 L524.9 479.5 L532.4 479.5 L539.8 479.5 L547.3 479.5 L554.8 479.5 L562.3 479.5 L569.8 479.5 L577.2 479.5 L584.7 479.5 L592.2 479.5 L599.7 479.5 L607.1 479.5 L614.6 479.5 L622.1 479.5 L629.6 479.5 L637.1 479.5 L644.5 479.5 L652.0 479.5 L659.5 479.5 L667.0 479.5 L674.5 479.5 L681.9 479.5 L689.4 479.5 L696.9 479.5 L704.4 479.5 L711.9 479.5 L719.3 479.5 L726.8 479.5 L734.3 479.5 L741.8 479.5 L749.2 479.5 L756.7 479.5 L764.2 477.0 L771.7 479.5 L779.2 479.5 L786.6 479.5 L794.1 479.5 L801.6 479.5 L809.1 479.5 L816.6 479.5 L846.5 479.5 L854.0 479.5 L861.4 479.5 L868.9 458.0 L876.4 479.5 L883.9 479.5 L891.4 458.0 L898.8 479.5 L906.3 479.5 L913.8 460.0 L921.3 479.5 L928.7 479.5 L936.2 463.0 L943.7 479.5 L951.2 479.5 L958.7 454.4 L966.1 479.5 L973.6 479.5 L981.1 456.6 L988.6 479.5 L996.1 479.5 L1003.5 479.5 L1011.0 479.5 L1018.5 479.5 L1026.0 447.8 L1033.5 479.5 L1040.9 479.5 L1048.4 449.7 L1055.9 479.5 L1063.4 479.5 L1070.8 473.0 L1078.3 479.5 L1085.8 479.5 L1093.3 460.4 L1100.8 479.5 L1108.2 479.5 L1115.7 479.5 L1123.2 479.5 L1130.7 479.5 L1138.2 454.0 L1145.6 479.5 L1153.1 479.5 L1175.6 366.6 L1183.0 443.4 L1190.5 367.3 L1198.0 361.4 L1205.5 311.3 L1212.9 478.8 L1220.4 479.5 L1227.9 479.5 L1235.4 479.5 L1242.9 479.5 L1250.3 479.5 L1257.8 479.5 L1265.3 479.5 L1272.8 479.5 L1280.3 479.5 L1287.7 479.5 L1295.2 479.5 L1302.7 479.5 L1310.2 450.6 L1317.7 479.5 L1325.1 479.5 L1332.6 479.5 L1347.6 479.5 L1355.0 479.5 L1362.5 479.5 L1377.5 479.5 L1392.4 477.0 L1399.9 479.5 L1407.4 479.5 L1414.9 479.5 L1422.4 479.5 L1429.8 479.5 L1437.3 479.5 L1444.8 479.5" fill="none" stroke="#3b3434" stroke-width="1.4"></path><circle cx="375.3" cy="479.5" r="2.3" fill="#3b3434"></circle><circle cx="382.8" cy="479.5" r="2.3" fill="#3b3434"></circle><circle cx="390.3" cy="479.5" r="2.3" fill="#3b3434"></circle><circle cx="397.7" cy="479.5" r="2.3" fill="#3b3434"></circle><circle cx="405.2" cy="479.5" r="2.3" fill="#3b3434"></circle><circle cx="412.7" cy="479.5" r="2.3" fill="#3b3434"></circle><circle cx="420.2" cy="439.4" r="2.3" fill="#3b3434"></circle><circle cx="427.7" cy="479.5" r="2.3" fill="#3b3434"></circle><circle cx="435.1" cy="479.5" r="2.3" fill="#3b3434"></circle><circle cx="442.6" cy="479.5" r="2.3" fill="#3b3434"></circle><circle cx="450.1" cy="479.5" r="2.3" fill="#3b3434"></circle><circle cx="457.6" cy="479.5" r="2.3" fill="#3b3434"></circle><circle cx="465.0" cy="479.5" r="2.3" fill="#3b3434"></circle><circle cx="472.5" cy="479.5" r="2.3" fill="#3b3434"></circle><circle cx="480.0" cy="479.5" r="2.3" fill="#3b3434"></circle><circle cx="487.5" cy="479.5" r="2.3" fill="#3b3434"></circle><circle cx="495.0" cy="479.5" r="2.3" fill="#3b3434"></circle><circle cx="502.4" cy="479.5" r="2.3" fill="#3b3434"></circle><circle cx="509.9" cy="479.5" r="2.3" fill="#3b3434"></circle><circle cx="517.4" cy="479.5" r="2.3" fill="#3b3434"></circle><circle cx="524.9" cy="479.5" r="2.3" fill="#3b3434"></circle><circle cx="532.4" cy="479.5" r="2.3" fill="#3b3434"></circle><circle cx="539.8" cy="479.5" r="2.3" fill="#3b3434"></circle><circle cx="547.3" cy="479.5" r="2.3" fill="#3b3434"></circle><circle cx="554.8" cy="479.5" r="2.3" fill="#3b3434"></circle><circle cx="562.3" cy="479.5" r="2.3" fill="#3b3434"></circle><circle cx="569.8" cy="479.5" r="2.3" fill="#3b3434"></circle><circle cx="577.2" cy="479.5" r="2.3" fill="#3b3434"></circle><circle cx="584.7" cy="479.5" r="2.3" fill="#3b3434"></circle><circle cx="592.2" cy="479.5" r="2.3" fill="#3b3434"></circle><circle cx="599.7" cy="479.5" r="2.3" fill="#3b3434"></circle><circle cx="607.1" cy="479.5" r="2.3" fill="#3b3434"></circle><circle cx="614.6" cy="479.5" r="2.3" fill="#3b3434"></circle><circle cx="622.1" cy="479.5" r="2.3" fill="#3b3434"></circle><circle cx="629.6" cy="479.5" r="2.3" fill="#3b3434"></circle><circle cx="637.1" cy="479.5" r="2.3" fill="#3b3434"></circle><circle cx="644.5" cy="479.5" r="2.3" fill="#3b3434"></circle><circle cx="652.0" cy="479.5" r="2.3" fill="#3b3434"></circle><circle cx="659.5" cy="479.5" r="2.3" fill="#3b3434"></circle><circle cx="667.0" cy="479.5" r="2.3" fill="#3b3434"></circle><circle cx="674.5" cy="479.5" r="2.3" fill="#3b3434"></circle><circle cx="681.9" cy="479.5" r="2.3" fill="#3b3434"></circle><circle cx="689.4" cy="479.5" r="2.3" fill="#3b3434"></circle><circle cx="696.9" cy="479.5" r="2.3" fill="#3b3434"></circle><circle cx="704.4" cy="479.5" r="2.3" fill="#3b3434"></circle><circle cx="711.9" cy="479.5" r="2.3" fill="#3b3434"></circle><circle cx="719.3" cy="479.5" r="2.3" fill="#3b3434"></circle><circle cx="726.8" cy="479.5" r="2.3" fill="#3b3434"></circle><circle cx="734.3" cy="479.5" r="2.3" fill="#3b3434"></circle><circle cx="741.8" cy="479.5" r="2.3" fill="#3b3434"></circle><circle cx="749.2" cy="479.5" r="2.3" fill="#3b3434"></circle><circle cx="756.7" cy="479.5" r="2.3" fill="#3b3434"></circle><circle cx="764.2" cy="477.0" r="2.3" fill="#3b3434"></circle><circle cx="771.7" cy="479.5" r="2.3" fill="#3b3434"></circle><circle cx="779.2" cy="479.5" r="2.3" fill="#3b3434"></circle><circle cx="786.6" cy="479.5" r="2.3" fill="#3b3434"></circle><circle cx="794.1" cy="479.5" r="2.3" fill="#3b3434"></circle><circle cx="801.6" cy="479.5" r="2.3" fill="#3b3434"></circle><circle cx="809.1" cy="479.5" r="2.3" fill="#3b3434"></circle><circle cx="816.6" cy="479.5" r="2.3" fill="#3b3434"></circle><circle cx="846.5" cy="479.5" r="2.3" fill="#3b3434"></circle><circle cx="854.0" cy="479.5" r="2.3" fill="#3b3434"></circle><circle cx="861.4" cy="479.5" r="2.3" fill="#3b3434"></circle><circle cx="868.9" cy="458.0" r="2.3" fill="#3b3434"></circle><circle cx="876.4" cy="479.5" r="2.3" fill="#3b3434"></circle><circle cx="883.9" cy="479.5" r="2.3" fill="#3b3434"></circle><circle cx="891.4" cy="458.0" r="2.3" fill="#3b3434"></circle><circle cx="898.8" cy="479.5" r="2.3" fill="#3b3434"></circle><circle cx="906.3" cy="479.5" r="2.3" fill="#3b3434"></circle><circle cx="913.8" cy="460.0" r="2.3" fill="#3b3434"></circle><circle cx="921.3" cy="479.5" r="2.3" fill="#3b3434"></circle><circle cx="928.7" cy="479.5" r="2.3" fill="#3b3434"></circle><circle cx="936.2" cy="463.0" r="2.3" fill="#3b3434"></circle><circle cx="943.7" cy="479.5" r="2.3" fill="#3b3434"></circle><circle cx="951.2" cy="479.5" r="2.3" fill="#3b3434"></circle><circle cx="958.7" cy="454.4" r="2.3" fill="#3b3434"></circle><circle cx="966.1" cy="479.5" r="2.3" fill="#3b3434"></circle><circle cx="973.6" cy="479.5" r="2.3" fill="#3b3434"></circle><circle cx="981.1" cy="456.6" r="2.3" fill="#3b3434"></circle><circle cx="988.6" cy="479.5" r="2.3" fill="#3b3434"></circle><circle cx="996.1" cy="479.5" r="2.3" fill="#3b3434"></circle><circle cx="1003.5" cy="479.5" r="2.3" fill="#3b3434"></circle><circle cx="1011.0" cy="479.5" r="2.3" fill="#3b3434"></circle><circle cx="1018.5" cy="479.5" r="2.3" fill="#3b3434"></circle><circle cx="1026.0" cy="447.8" r="2.3" fill="#3b3434"></circle><circle cx="1033.5" cy="479.5" r="2.3" fill="#3b3434"></circle><circle cx="1040.9" cy="479.5" r="2.3" fill="#3b3434"></circle><circle cx="1048.4" cy="449.7" r="2.3" fill="#3b3434"></circle><circle cx="1055.9" cy="479.5" r="2.3" fill="#3b3434"></circle><circle cx="1063.4" cy="479.5" r="2.3" fill="#3b3434"></circle><circle cx="1070.8" cy="473.0" r="2.3" fill="#3b3434"></circle><circle cx="1078.3" cy="479.5" r="2.3" fill="#3b3434"></circle><circle cx="1085.8" cy="479.5" r="2.3" fill="#3b3434"></circle><circle cx="1093.3" cy="460.4" r="2.3" fill="#3b3434"></circle><circle cx="1100.8" cy="479.5" r="2.3" fill="#3b3434"></circle><circle cx="1108.2" cy="479.5" r="2.3" fill="#3b3434"></circle><circle cx="1115.7" cy="479.5" r="2.3" fill="#3b3434"></circle><circle cx="1123.2" cy="479.5" r="2.3" fill="#3b3434"></circle><circle cx="1130.7" cy="479.5" r="2.3" fill="#3b3434"></circle><circle cx="1138.2" cy="454.0" r="2.3" fill="#3b3434"></circle><circle cx="1145.6" cy="479.5" r="2.3" fill="#3b3434"></circle><circle cx="1153.1" cy="479.5" r="2.3" fill="#3b3434"></circle><circle cx="1175.6" cy="366.6" r="2.3" fill="#3b3434"></circle><circle cx="1183.0" cy="443.4" r="2.3" fill="#3b3434"></circle><circle cx="1190.5" cy="367.3" r="2.3" fill="#3b3434"></circle><circle cx="1198.0" cy="361.4" r="2.3" fill="#3b3434"></circle><circle cx="1205.5" cy="311.3" r="2.3" fill="#3b3434"></circle><circle cx="1212.9" cy="478.8" r="2.3" fill="#3b3434"></circle><circle cx="1220.4" cy="479.5" r="2.3" fill="#3b3434"></circle><circle cx="1227.9" cy="479.5" r="2.3" fill="#3b3434"></circle><circle cx="1235.4" cy="479.5" r="2.3" fill="#3b3434"></circle><circle cx="1242.9" cy="479.5" r="2.3" fill="#3b3434"></circle><circle cx="1250.3" cy="479.5" r="2.3" fill="#3b3434"></circle><circle cx="1257.8" cy="479.5" r="2.3" fill="#3b3434"></circle><circle cx="1265.3" cy="479.5" r="2.3" fill="#3b3434"></circle><circle cx="1272.8" cy="479.5" r="2.3" fill="#3b3434"></circle><circle cx="1280.3" cy="479.5" r="2.3" fill="#3b3434"></circle><circle cx="1287.7" cy="479.5" r="2.3" fill="#3b3434"></circle><circle cx="1295.2" cy="479.5" r="2.3" fill="#3b3434"></circle><circle cx="1302.7" cy="479.5" r="2.3" fill="#3b3434"></circle><circle cx="1310.2" cy="450.6" r="2.3" fill="#3b3434"></circle><circle cx="1317.7" cy="479.5" r="2.3" fill="#3b3434"></circle><circle cx="1325.1" cy="479.5" r="2.3" fill="#3b3434"></circle><circle cx="1332.6" cy="479.5" r="2.3" fill="#3b3434"></circle><circle cx="1347.6" cy="479.5" r="2.3" fill="#3b3434"></circle><circle cx="1355.0" cy="479.5" r="2.3" fill="#3b3434"></circle><circle cx="1362.5" cy="479.5" r="2.3" fill="#3b3434"></circle><circle cx="1377.5" cy="479.5" r="2.3" fill="#3b3434"></circle><circle cx="1392.4" cy="477.0" r="2.3" fill="#3b3434"></circle><circle cx="1399.9" cy="479.5" r="2.3" fill="#3b3434"></circle><circle cx="1407.4" cy="479.5" r="2.3" fill="#3b3434"></circle><circle cx="1414.9" cy="479.5" r="2.3" fill="#3b3434"></circle><circle cx="1422.4" cy="479.5" r="2.3" fill="#3b3434"></circle><circle cx="1429.8" cy="479.5" r="2.3" fill="#3b3434"></circle><circle cx="1437.3" cy="479.5" r="2.3" fill="#3b3434"></circle><circle cx="1444.8" cy="479.5" r="2.3" fill="#3b3434"></circle></g><g opacity="0.12"><path d="M375.3 445.8 L397.7 442.0 L420.2 432.0 L450.1 435.0 L472.5 420.0 L495.0 402.2 L517.4 450.4 L584.7 440.1 L629.6 430.7 L652.0 427.9 L674.5 427.0 L696.9 444.8 L719.3 442.0 L741.8 441.6 L764.2 436.0 L786.6 434.9 L809.1 431.7 L854.0 413.4 L861.4 441.1 L883.9 448.0 L906.3 437.9 L928.7 440.1 L951.2 436.4 L973.6 433.5 L996.1 420.4 L1018.5 428.8 L1040.9 440.1 L1063.4 444.8 L1085.8 441.1 L1108.2 441.1 L1130.7 433.9 L1153.1 436.4 L1175.6 355.0 L1183.0 367.3 L1205.5 400.5 L1220.4 436.0 L1265.3 432.8 L1287.7 440.6 L1310.2 420.7 L1332.6 431.0 L1355.0 413.8 L1377.5 414.0 L1399.9 445.0 L1422.4 445.0 L1444.8 437.6" fill="none" stroke="#3aa7a3" stroke-width="1.4"></path><circle cx="375.3" cy="445.8" r="2.3" fill="#3aa7a3"></circle><circle cx="397.7" cy="442.0" r="2.3" fill="#3aa7a3"></circle><circle cx="420.2" cy="432.0" r="2.3" fill="#3aa7a3"></circle><circle cx="450.1" cy="435.0" r="2.3" fill="#3aa7a3"></circle><circle cx="472.5" cy="420.0" r="2.3" fill="#3aa7a3"></circle><circle cx="495.0" cy="402.2" r="2.3" fill="#3aa7a3"></circle><circle cx="517.4" cy="450.4" r="2.3" fill="#3aa7a3"></circle><circle cx="584.7" cy="440.1" r="2.3" fill="#3aa7a3"></circle><circle cx="629.6" cy="430.7" r="2.3" fill="#3aa7a3"></circle><circle cx="652.0" cy="427.9" r="2.3" fill="#3aa7a3"></circle><circle cx="674.5" cy="427.0" r="2.3" fill="#3aa7a3"></circle><circle cx="696.9" cy="444.8" r="2.3" fill="#3aa7a3"></circle><circle cx="719.3" cy="442.0" r="2.3" fill="#3aa7a3"></circle><circle cx="741.8" cy="441.6" r="2.3" fill="#3aa7a3"></circle><circle cx="764.2" cy="436.0" r="2.3" fill="#3aa7a3"></circle><circle cx="786.6" cy="434.9" r="2.3" fill="#3aa7a3"></circle><circle cx="809.1" cy="431.7" r="2.3" fill="#3aa7a3"></circle><circle cx="854.0" cy="413.4" r="2.3" fill="#3aa7a3"></circle><circle cx="861.4" cy="441.1" r="2.3" fill="#3aa7a3"></circle><circle cx="883.9" cy="448.0" r="2.3" fill="#3aa7a3"></circle><circle cx="906.3" cy="437.9" r="2.3" fill="#3aa7a3"></circle><circle cx="928.7" cy="440.1" r="2.3" fill="#3aa7a3"></circle><circle cx="951.2" cy="436.4" r="2.3" fill="#3aa7a3"></circle><circle cx="973.6" cy="433.5" r="2.3" fill="#3aa7a3"></circle><circle cx="996.1" cy="420.4" r="2.3" fill="#3aa7a3"></circle><circle cx="1018.5" cy="428.8" r="2.3" fill="#3aa7a3"></circle><circle cx="1040.9" cy="440.1" r="2.3" fill="#3aa7a3"></circle><circle cx="1063.4" cy="444.8" r="2.3" fill="#3aa7a3"></circle><circle cx="1085.8" cy="441.1" r="2.3" fill="#3aa7a3"></circle><circle cx="1108.2" cy="441.1" r="2.3" fill="#3aa7a3"></circle><circle cx="1130.7" cy="433.9" r="2.3" fill="#3aa7a3"></circle><circle cx="1153.1" cy="436.4" r="2.3" fill="#3aa7a3"></circle><circle cx="1175.6" cy="355.0" r="2.3" fill="#3aa7a3"></circle><circle cx="1183.0" cy="367.3" r="2.3" fill="#3aa7a3"></circle><circle cx="1205.5" cy="400.5" r="2.3" fill="#3aa7a3"></circle><circle cx="1220.4" cy="436.0" r="2.3" fill="#3aa7a3"></circle><circle cx="1265.3" cy="432.8" r="2.3" fill="#3aa7a3"></circle><circle cx="1287.7" cy="440.6" r="2.3" fill="#3aa7a3"></circle><circle cx="1310.2" cy="420.7" r="2.3" fill="#3aa7a3"></circle><circle cx="1332.6" cy="431.0" r="2.3" fill="#3aa7a3"></circle><circle cx="1355.0" cy="413.8" r="2.3" fill="#3aa7a3"></circle><circle cx="1377.5" cy="414.0" r="2.3" fill="#3aa7a3"></circle><circle cx="1399.9" cy="445.0" r="2.3" fill="#3aa7a3"></circle><circle cx="1422.4" cy="445.0" r="2.3" fill="#3aa7a3"></circle><circle cx="1444.8" cy="437.6" r="2.3" fill="#3aa7a3"></circle></g><g opacity="0.12"><path d="M375.3 431.1 L405.2 440.5 L420.2 443.9 L427.7 441.1 L450.1 440.1 L472.5 440.1 L495.0 446.1 L517.4 446.7 L584.7 446.1 L607.1 442.0 L629.6 444.8 L652.0 442.9 L674.5 441.6 L696.9 446.1 L719.3 445.8 L741.8 441.6 L764.2 448.0 L786.6 441.6 L809.1 447.1 L846.5 431.7 L854.0 426.0 L861.4 441.1 L883.9 430.7 L906.3 437.3 L928.7 435.4 L958.7 440.1 L981.1 432.2 L1003.5 434.9 L1026.0 430.3 L1048.4 422.8 L1063.4 439.7 L1085.8 434.5 L1115.7 442.9 L1138.2 432.6 L1153.1 430.3 L1183.0 400.0 L1198.0 380.0 L1205.5 330.0 L1212.9 440.0 L1242.9 447.0 L1287.7 446.0 L1332.6 446.0 L1377.5 445.0 L1399.9 445.5 L1444.8 446.0" fill="none" stroke="#9b4fa8" stroke-width="1.4"></path><circle cx="375.3" cy="431.1" r="2.3" fill="#9b4fa8"></circle><circle cx="405.2" cy="440.5" r="2.3" fill="#9b4fa8"></circle><circle cx="420.2" cy="443.9" r="2.3" fill="#9b4fa8"></circle><circle cx="427.7" cy="441.1" r="2.3" fill="#9b4fa8"></circle><circle cx="450.1" cy="440.1" r="2.3" fill="#9b4fa8"></circle><circle cx="472.5" cy="440.1" r="2.3" fill="#9b4fa8"></circle><circle cx="495.0" cy="446.1" r="2.3" fill="#9b4fa8"></circle><circle cx="517.4" cy="446.7" r="2.3" fill="#9b4fa8"></circle><circle cx="584.7" cy="446.1" r="2.3" fill="#9b4fa8"></circle><circle cx="607.1" cy="442.0" r="2.3" fill="#9b4fa8"></circle><circle cx="629.6" cy="444.8" r="2.3" fill="#9b4fa8"></circle><circle cx="652.0" cy="442.9" r="2.3" fill="#9b4fa8"></circle><circle cx="674.5" cy="441.6" r="2.3" fill="#9b4fa8"></circle><circle cx="696.9" cy="446.1" r="2.3" fill="#9b4fa8"></circle><circle cx="719.3" cy="445.8" r="2.3" fill="#9b4fa8"></circle><circle cx="741.8" cy="441.6" r="2.3" fill="#9b4fa8"></circle><circle cx="764.2" cy="448.0" r="2.3" fill="#9b4fa8"></circle><circle cx="786.6" cy="441.6" r="2.3" fill="#9b4fa8"></circle><circle cx="809.1" cy="447.1" r="2.3" fill="#9b4fa8"></circle><circle cx="846.5" cy="431.7" r="2.3" fill="#9b4fa8"></circle><circle cx="854.0" cy="426.0" r="2.3" fill="#9b4fa8"></circle><circle cx="861.4" cy="441.1" r="2.3" fill="#9b4fa8"></circle><circle cx="883.9" cy="430.7" r="2.3" fill="#9b4fa8"></circle><circle cx="906.3" cy="437.3" r="2.3" fill="#9b4fa8"></circle><circle cx="928.7" cy="435.4" r="2.3" fill="#9b4fa8"></circle><circle cx="958.7" cy="440.1" r="2.3" fill="#9b4fa8"></circle><circle cx="981.1" cy="432.2" r="2.3" fill="#9b4fa8"></circle><circle cx="1003.5" cy="434.9" r="2.3" fill="#9b4fa8"></circle><circle cx="1026.0" cy="430.3" r="2.3" fill="#9b4fa8"></circle><circle cx="1048.4" cy="422.8" r="2.3" fill="#9b4fa8"></circle><circle cx="1063.4" cy="439.7" r="2.3" fill="#9b4fa8"></circle><circle cx="1085.8" cy="434.5" r="2.3" fill="#9b4fa8"></circle><circle cx="1115.7" cy="442.9" r="2.3" fill="#9b4fa8"></circle><circle cx="1138.2" cy="432.6" r="2.3" fill="#9b4fa8"></circle><circle cx="1153.1" cy="430.3" r="2.3" fill="#9b4fa8"></circle><circle cx="1183.0" cy="400.0" r="2.3" fill="#9b4fa8"></circle><circle cx="1198.0" cy="380.0" r="2.3" fill="#9b4fa8"></circle><circle cx="1205.5" cy="330.0" r="2.3" fill="#9b4fa8"></circle><circle cx="1212.9" cy="440.0" r="2.3" fill="#9b4fa8"></circle><circle cx="1242.9" cy="447.0" r="2.3" fill="#9b4fa8"></circle><circle cx="1287.7" cy="446.0" r="2.3" fill="#9b4fa8"></circle><circle cx="1332.6" cy="446.0" r="2.3" fill="#9b4fa8"></circle><circle cx="1377.5" cy="445.0" r="2.3" fill="#9b4fa8"></circle><circle cx="1399.9" cy="445.5" r="2.3" fill="#9b4fa8"></circle><circle cx="1444.8" cy="446.0" r="2.3" fill="#9b4fa8"></circle></g><g opacity="0.12"><path d="M375.3 458.0 L397.7 448.6 L420.2 432.0 L427.7 449.9 L450.1 455.1 L472.5 444.8 L495.0 421.7 L517.4 458.9 L539.8 461.2 L562.3 453.3 L584.7 452.3 L607.1 454.2 L629.6 446.7 L652.0 444.8 L674.5 416.6 L696.9 457.0 L719.3 458.0 L741.8 455.7 L764.2 456.1 L786.6 450.4 L809.1 449.9 L854.0 448.6 L861.4 449.9 L883.9 462.7 L906.3 458.0 L928.7 455.1 L951.2 453.3 L996.1 448.6 L1018.5 446.7 L1040.9 440.1 L1063.4 458.9 L1108.2 453.3 L1130.7 449.5 L1153.1 451.4 L1183.0 427.0 L1198.0 377.5 L1205.5 423.5 L1220.4 446.0 L1265.3 442.0 L1287.7 450.6 L1310.2 442.0 L1332.6 439.4 L1355.0 443.7 L1377.5 444.5 L1399.9 441.0 L1422.4 456.0 L1444.8 453.0" fill="none" stroke="#ee8a3c" stroke-width="1.4"></path><circle cx="375.3" cy="458.0" r="2.3" fill="#ee8a3c"></circle><circle cx="397.7" cy="448.6" r="2.3" fill="#ee8a3c"></circle><circle cx="420.2" cy="432.0" r="2.3" fill="#ee8a3c"></circle><circle cx="427.7" cy="449.9" r="2.3" fill="#ee8a3c"></circle><circle cx="450.1" cy="455.1" r="2.3" fill="#ee8a3c"></circle><circle cx="472.5" cy="444.8" r="2.3" fill="#ee8a3c"></circle><circle cx="495.0" cy="421.7" r="2.3" fill="#ee8a3c"></circle><circle cx="517.4" cy="458.9" r="2.3" fill="#ee8a3c"></circle><circle cx="539.8" cy="461.2" r="2.3" fill="#ee8a3c"></circle><circle cx="562.3" cy="453.3" r="2.3" fill="#ee8a3c"></circle><circle cx="584.7" cy="452.3" r="2.3" fill="#ee8a3c"></circle><circle cx="607.1" cy="454.2" r="2.3" fill="#ee8a3c"></circle><circle cx="629.6" cy="446.7" r="2.3" fill="#ee8a3c"></circle><circle cx="652.0" cy="444.8" r="2.3" fill="#ee8a3c"></circle><circle cx="674.5" cy="416.6" r="2.3" fill="#ee8a3c"></circle><circle cx="696.9" cy="457.0" r="2.3" fill="#ee8a3c"></circle><circle cx="719.3" cy="458.0" r="2.3" fill="#ee8a3c"></circle><circle cx="741.8" cy="455.7" r="2.3" fill="#ee8a3c"></circle><circle cx="764.2" cy="456.1" r="2.3" fill="#ee8a3c"></circle><circle cx="786.6" cy="450.4" r="2.3" fill="#ee8a3c"></circle><circle cx="809.1" cy="449.9" r="2.3" fill="#ee8a3c"></circle><circle cx="854.0" cy="448.6" r="2.3" fill="#ee8a3c"></circle><circle cx="861.4" cy="449.9" r="2.3" fill="#ee8a3c"></circle><circle cx="883.9" cy="462.7" r="2.3" fill="#ee8a3c"></circle><circle cx="906.3" cy="458.0" r="2.3" fill="#ee8a3c"></circle><circle cx="928.7" cy="455.1" r="2.3" fill="#ee8a3c"></circle><circle cx="951.2" cy="453.3" r="2.3" fill="#ee8a3c"></circle><circle cx="996.1" cy="448.6" r="2.3" fill="#ee8a3c"></circle><circle cx="1018.5" cy="446.7" r="2.3" fill="#ee8a3c"></circle><circle cx="1040.9" cy="440.1" r="2.3" fill="#ee8a3c"></circle><circle cx="1063.4" cy="458.9" r="2.3" fill="#ee8a3c"></circle><circle cx="1108.2" cy="453.3" r="2.3" fill="#ee8a3c"></circle><circle cx="1130.7" cy="449.5" r="2.3" fill="#ee8a3c"></circle><circle cx="1153.1" cy="451.4" r="2.3" fill="#ee8a3c"></circle><circle cx="1183.0" cy="427.0" r="2.3" fill="#ee8a3c"></circle><circle cx="1198.0" cy="377.5" r="2.3" fill="#ee8a3c"></circle><circle cx="1205.5" cy="423.5" r="2.3" fill="#ee8a3c"></circle><circle cx="1220.4" cy="446.0" r="2.3" fill="#ee8a3c"></circle><circle cx="1265.3" cy="442.0" r="2.3" fill="#ee8a3c"></circle><circle cx="1287.7" cy="450.6" r="2.3" fill="#ee8a3c"></circle><circle cx="1310.2" cy="442.0" r="2.3" fill="#ee8a3c"></circle><circle cx="1332.6" cy="439.4" r="2.3" fill="#ee8a3c"></circle><circle cx="1355.0" cy="443.7" r="2.3" fill="#ee8a3c"></circle><circle cx="1377.5" cy="444.5" r="2.3" fill="#ee8a3c"></circle><circle cx="1399.9" cy="441.0" r="2.3" fill="#ee8a3c"></circle><circle cx="1422.4" cy="456.0" r="2.3" fill="#ee8a3c"></circle><circle cx="1444.8" cy="453.0" r="2.3" fill="#ee8a3c"></circle></g><g opacity="0.1"><path d="M375.3 464.4 L382.8 464.1 L390.3 463.6 L397.7 463.2 L405.2 462.3 L412.7 462.0 L420.2 443.1 L427.7 443.3 L435.1 460.7 L442.6 460.1 L450.1 432.1 L457.6 458.2 L465.0 458.1 L472.5 436.8 L480.0 456.9 L487.5 456.6 L495.0 424.5 L502.4 468.0 L509.9 467.6 L517.4 466.9 L524.9 466.1 L532.4 466.0 L539.8 453.4 L547.3 464.8 L554.8 464.7 L562.3 447.2 L569.8 463.0 L577.2 462.6 L584.7 462.0 L592.2 461.6 L599.7 461.3 L607.1 445.5 L614.6 460.7 L622.1 458.7 L629.6 453.4 L637.1 452.1 L644.5 457.8 L652.0 439.2 L659.5 456.5 L667.0 456.5 L674.5 455.4 L681.9 468.6 L689.4 468.0 L696.9 457.5 L704.4 466.9 L711.9 466.4 L719.3 453.2 L726.8 465.2 L734.3 465.1 L741.8 464.2 L749.2 463.3 L756.7 462.9 L764.2 447.2 L771.7 462.2 L779.2 461.6 L786.6 461.0 L794.1 460.7 L801.6 460.1 L809.1 459.2 L816.6 458.5 L846.5 442.8 L854.0 432.0 L861.4 465.0 L868.9 461.4 L876.4 469.1 L883.9 468.5 L891.4 459.8 L898.8 467.0 L906.3 466.7 L913.8 459.4 L921.3 465.5 L928.7 465.1 L936.2 458.9 L943.7 463.8 L951.2 463.8 L958.7 454.1 L966.1 462.3 L973.6 464.4 L981.1 451.2 L988.6 460.7 L996.1 460.4 L1003.5 449.3 L1011.0 458.8 L1018.5 458.5 L1026.0 445.9 L1033.5 456.9 L1040.9 458.9 L1048.4 438.3 L1055.9 467.9 L1063.4 467.0 L1070.8 463.2 L1078.3 466.0 L1085.8 465.1 L1093.3 458.7 L1100.8 463.8 L1108.2 463.3 L1115.7 452.8 L1123.2 461.9 L1130.7 461.7 L1138.2 452.3 L1145.6 442.9 L1153.1 460.2 L1175.6 383.6 L1183.0 411.0 L1190.5 400.0 L1198.0 397.4 L1205.5 274.5 L1212.9 445.0 L1220.4 467.0 L1227.9 466.7 L1235.4 455.6 L1242.9 465.7 L1250.3 459.5 L1257.8 464.5 L1265.3 460.0 L1272.8 463.4 L1280.3 451.9 L1287.7 461.8 L1295.2 456.5 L1302.7 461.3 L1310.2 438.3 L1317.7 459.8 L1325.1 447.1 L1332.6 458.8 L1347.6 432.8 L1355.0 440.6 L1362.5 456.7 L1377.5 406.1 L1392.4 423.8 L1399.9 466.9 L1407.4 466.0 L1414.9 461.4 L1422.4 465.2 L1429.8 456.5 L1437.3 464.2 L1444.8 446.4" fill="none" stroke="#3d4a8a" stroke-width="1.4"></path><circle cx="375.3" cy="464.4" r="2.3" fill="#3d4a8a"></circle><circle cx="382.8" cy="464.1" r="2.3" fill="#3d4a8a"></circle><circle cx="390.3" cy="463.6" r="2.3" fill="#3d4a8a"></circle><circle cx="397.7" cy="463.2" r="2.3" fill="#3d4a8a"></circle><circle cx="405.2" cy="462.3" r="2.3" fill="#3d4a8a"></circle><circle cx="412.7" cy="462.0" r="2.3" fill="#3d4a8a"></circle><circle cx="420.2" cy="443.1" r="2.3" fill="#3d4a8a"></circle><circle cx="427.7" cy="443.3" r="2.3" fill="#3d4a8a"></circle><circle cx="435.1" cy="460.7" r="2.3" fill="#3d4a8a"></circle><circle cx="442.6" cy="460.1" r="2.3" fill="#3d4a8a"></circle><circle cx="450.1" cy="432.1" r="2.3" fill="#3d4a8a"></circle><circle cx="457.6" cy="458.2" r="2.3" fill="#3d4a8a"></circle><circle cx="465.0" cy="458.1" r="2.3" fill="#3d4a8a"></circle><circle cx="472.5" cy="436.8" r="2.3" fill="#3d4a8a"></circle><circle cx="480.0" cy="456.9" r="2.3" fill="#3d4a8a"></circle><circle cx="487.5" cy="456.6" r="2.3" fill="#3d4a8a"></circle><circle cx="495.0" cy="424.5" r="2.3" fill="#3d4a8a"></circle><circle cx="502.4" cy="468.0" r="2.3" fill="#3d4a8a"></circle><circle cx="509.9" cy="467.6" r="2.3" fill="#3d4a8a"></circle><circle cx="517.4" cy="466.9" r="2.3" fill="#3d4a8a"></circle><circle cx="524.9" cy="466.1" r="2.3" fill="#3d4a8a"></circle><circle cx="532.4" cy="466.0" r="2.3" fill="#3d4a8a"></circle><circle cx="539.8" cy="453.4" r="2.3" fill="#3d4a8a"></circle><circle cx="547.3" cy="464.8" r="2.3" fill="#3d4a8a"></circle><circle cx="554.8" cy="464.7" r="2.3" fill="#3d4a8a"></circle><circle cx="562.3" cy="447.2" r="2.3" fill="#3d4a8a"></circle><circle cx="569.8" cy="463.0" r="2.3" fill="#3d4a8a"></circle><circle cx="577.2" cy="462.6" r="2.3" fill="#3d4a8a"></circle><circle cx="584.7" cy="462.0" r="2.3" fill="#3d4a8a"></circle><circle cx="592.2" cy="461.6" r="2.3" fill="#3d4a8a"></circle><circle cx="599.7" cy="461.3" r="2.3" fill="#3d4a8a"></circle><circle cx="607.1" cy="445.5" r="2.3" fill="#3d4a8a"></circle><circle cx="614.6" cy="460.7" r="2.3" fill="#3d4a8a"></circle><circle cx="622.1" cy="458.7" r="2.3" fill="#3d4a8a"></circle><circle cx="629.6" cy="453.4" r="2.3" fill="#3d4a8a"></circle><circle cx="637.1" cy="452.1" r="2.3" fill="#3d4a8a"></circle><circle cx="644.5" cy="457.8" r="2.3" fill="#3d4a8a"></circle><circle cx="652.0" cy="439.2" r="2.3" fill="#3d4a8a"></circle><circle cx="659.5" cy="456.5" r="2.3" fill="#3d4a8a"></circle><circle cx="667.0" cy="456.5" r="2.3" fill="#3d4a8a"></circle><circle cx="674.5" cy="455.4" r="2.3" fill="#3d4a8a"></circle><circle cx="681.9" cy="468.6" r="2.3" fill="#3d4a8a"></circle><circle cx="689.4" cy="468.0" r="2.3" fill="#3d4a8a"></circle><circle cx="696.9" cy="457.5" r="2.3" fill="#3d4a8a"></circle><circle cx="704.4" cy="466.9" r="2.3" fill="#3d4a8a"></circle><circle cx="711.9" cy="466.4" r="2.3" fill="#3d4a8a"></circle><circle cx="719.3" cy="453.2" r="2.3" fill="#3d4a8a"></circle><circle cx="726.8" cy="465.2" r="2.3" fill="#3d4a8a"></circle><circle cx="734.3" cy="465.1" r="2.3" fill="#3d4a8a"></circle><circle cx="741.8" cy="464.2" r="2.3" fill="#3d4a8a"></circle><circle cx="749.2" cy="463.3" r="2.3" fill="#3d4a8a"></circle><circle cx="756.7" cy="462.9" r="2.3" fill="#3d4a8a"></circle><circle cx="764.2" cy="447.2" r="2.3" fill="#3d4a8a"></circle><circle cx="771.7" cy="462.2" r="2.3" fill="#3d4a8a"></circle><circle cx="779.2" cy="461.6" r="2.3" fill="#3d4a8a"></circle><circle cx="786.6" cy="461.0" r="2.3" fill="#3d4a8a"></circle><circle cx="794.1" cy="460.7" r="2.3" fill="#3d4a8a"></circle><circle cx="801.6" cy="460.1" r="2.3" fill="#3d4a8a"></circle><circle cx="809.1" cy="459.2" r="2.3" fill="#3d4a8a"></circle><circle cx="816.6" cy="458.5" r="2.3" fill="#3d4a8a"></circle><circle cx="846.5" cy="442.8" r="2.3" fill="#3d4a8a"></circle><circle cx="854.0" cy="432.0" r="2.3" fill="#3d4a8a"></circle><circle cx="861.4" cy="465.0" r="2.3" fill="#3d4a8a"></circle><circle cx="868.9" cy="461.4" r="2.3" fill="#3d4a8a"></circle><circle cx="876.4" cy="469.1" r="2.3" fill="#3d4a8a"></circle><circle cx="883.9" cy="468.5" r="2.3" fill="#3d4a8a"></circle><circle cx="891.4" cy="459.8" r="2.3" fill="#3d4a8a"></circle><circle cx="898.8" cy="467.0" r="2.3" fill="#3d4a8a"></circle><circle cx="906.3" cy="466.7" r="2.3" fill="#3d4a8a"></circle><circle cx="913.8" cy="459.4" r="2.3" fill="#3d4a8a"></circle><circle cx="921.3" cy="465.5" r="2.3" fill="#3d4a8a"></circle><circle cx="928.7" cy="465.1" r="2.3" fill="#3d4a8a"></circle><circle cx="936.2" cy="458.9" r="2.3" fill="#3d4a8a"></circle><circle cx="943.7" cy="463.8" r="2.3" fill="#3d4a8a"></circle><circle cx="951.2" cy="463.8" r="2.3" fill="#3d4a8a"></circle><circle cx="958.7" cy="454.1" r="2.3" fill="#3d4a8a"></circle><circle cx="966.1" cy="462.3" r="2.3" fill="#3d4a8a"></circle><circle cx="973.6" cy="464.4" r="2.3" fill="#3d4a8a"></circle><circle cx="981.1" cy="451.2" r="2.3" fill="#3d4a8a"></circle><circle cx="988.6" cy="460.7" r="2.3" fill="#3d4a8a"></circle><circle cx="996.1" cy="460.4" r="2.3" fill="#3d4a8a"></circle><circle cx="1003.5" cy="449.3" r="2.3" fill="#3d4a8a"></circle><circle cx="1011.0" cy="458.8" r="2.3" fill="#3d4a8a"></circle><circle cx="1018.5" cy="458.5" r="2.3" fill="#3d4a8a"></circle><circle cx="1026.0" cy="445.9" r="2.3" fill="#3d4a8a"></circle><circle cx="1033.5" cy="456.9" r="2.3" fill="#3d4a8a"></circle><circle cx="1040.9" cy="458.9" r="2.3" fill="#3d4a8a"></circle><circle cx="1048.4" cy="438.3" r="2.3" fill="#3d4a8a"></circle><circle cx="1055.9" cy="467.9" r="2.3" fill="#3d4a8a"></circle><circle cx="1063.4" cy="467.0" r="2.3" fill="#3d4a8a"></circle><circle cx="1070.8" cy="463.2" r="2.3" fill="#3d4a8a"></circle><circle cx="1078.3" cy="466.0" r="2.3" fill="#3d4a8a"></circle><circle cx="1085.8" cy="465.1" r="2.3" fill="#3d4a8a"></circle><circle cx="1093.3" cy="458.7" r="2.3" fill="#3d4a8a"></circle><circle cx="1100.8" cy="463.8" r="2.3" fill="#3d4a8a"></circle><circle cx="1108.2" cy="463.3" r="2.3" fill="#3d4a8a"></circle><circle cx="1115.7" cy="452.8" r="2.3" fill="#3d4a8a"></circle><circle cx="1123.2" cy="461.9" r="2.3" fill="#3d4a8a"></circle><circle cx="1130.7" cy="461.7" r="2.3" fill="#3d4a8a"></circle><circle cx="1138.2" cy="452.3" r="2.3" fill="#3d4a8a"></circle><circle cx="1145.6" cy="442.9" r="2.3" fill="#3d4a8a"></circle><circle cx="1153.1" cy="460.2" r="2.3" fill="#3d4a8a"></circle><circle cx="1175.6" cy="383.6" r="2.3" fill="#3d4a8a"></circle><circle cx="1183.0" cy="411.0" r="2.3" fill="#3d4a8a"></circle><circle cx="1190.5" cy="400.0" r="2.3" fill="#3d4a8a"></circle><circle cx="1198.0" cy="397.4" r="2.3" fill="#3d4a8a"></circle><circle cx="1205.5" cy="274.5" r="2.3" fill="#3d4a8a"></circle><circle cx="1212.9" cy="445.0" r="2.3" fill="#3d4a8a"></circle><circle cx="1220.4" cy="467.0" r="2.3" fill="#3d4a8a"></circle><circle cx="1227.9" cy="466.7" r="2.3" fill="#3d4a8a"></circle><circle cx="1235.4" cy="455.6" r="2.3" fill="#3d4a8a"></circle><circle cx="1242.9" cy="465.7" r="2.3" fill="#3d4a8a"></circle><circle cx="1250.3" cy="459.5" r="2.3" fill="#3d4a8a"></circle><circle cx="1257.8" cy="464.5" r="2.3" fill="#3d4a8a"></circle><circle cx="1265.3" cy="460.0" r="2.3" fill="#3d4a8a"></circle><circle cx="1272.8" cy="463.4" r="2.3" fill="#3d4a8a"></circle><circle cx="1280.3" cy="451.9" r="2.3" fill="#3d4a8a"></circle><circle cx="1287.7" cy="461.8" r="2.3" fill="#3d4a8a"></circle><circle cx="1295.2" cy="456.5" r="2.3" fill="#3d4a8a"></circle><circle cx="1302.7" cy="461.3" r="2.3" fill="#3d4a8a"></circle><circle cx="1310.2" cy="438.3" r="2.3" fill="#3d4a8a"></circle><circle cx="1317.7" cy="459.8" r="2.3" fill="#3d4a8a"></circle><circle cx="1325.1" cy="447.1" r="2.3" fill="#3d4a8a"></circle><circle cx="1332.6" cy="458.8" r="2.3" fill="#3d4a8a"></circle><circle cx="1347.6" cy="432.8" r="2.3" fill="#3d4a8a"></circle><circle cx="1355.0" cy="440.6" r="2.3" fill="#3d4a8a"></circle><circle cx="1362.5" cy="456.7" r="2.3" fill="#3d4a8a"></circle><circle cx="1377.5" cy="406.1" r="2.3" fill="#3d4a8a"></circle><circle cx="1392.4" cy="423.8" r="2.3" fill="#3d4a8a"></circle><circle cx="1399.9" cy="466.9" r="2.3" fill="#3d4a8a"></circle><circle cx="1407.4" cy="466.0" r="2.3" fill="#3d4a8a"></circle><circle cx="1414.9" cy="461.4" r="2.3" fill="#3d4a8a"></circle><circle cx="1422.4" cy="465.2" r="2.3" fill="#3d4a8a"></circle><circle cx="1429.8" cy="456.5" r="2.3" fill="#3d4a8a"></circle><circle cx="1437.3" cy="464.2" r="2.3" fill="#3d4a8a"></circle><circle cx="1444.8" cy="446.4" r="2.3" fill="#3d4a8a"></circle></g><g opacity="0.12"><path d="M375.3 464.0 L397.7 464.5 L420.2 464.0 L427.7 470.7 L450.1 468.3 L472.5 466.8 L495.0 465.9 L517.4 462.7 L539.8 464.2 L562.3 469.8 L584.7 462.7 L607.1 463.6 L629.6 461.7 L652.0 463.6 L674.5 461.2 L696.9 467.4 L719.3 463.6 L741.8 463.0 L764.2 463.0 L786.6 463.6 L809.1 464.9 L854.0 465.9 L861.4 462.7 L883.9 464.5 L906.3 462.7 L928.7 464.5 L973.6 463.6 L1018.5 463.6 L1040.9 460.8 L1063.4 462.7 L1085.8 465.5 L1108.2 463.6 L1153.1 463.6 L1183.0 402.0 L1190.5 411.0 L1198.0 452.7 L1220.4 462.0 L1265.3 460.0 L1287.7 464.5 L1310.2 455.0 L1332.6 463.7 L1355.0 460.6 L1377.5 467.0 L1399.9 466.0 L1422.4 464.5 L1444.8 461.4" fill="none" stroke="#5a9e3a" stroke-width="1.4"></path><circle cx="375.3" cy="464.0" r="2.3" fill="#5a9e3a"></circle><circle cx="397.7" cy="464.5" r="2.3" fill="#5a9e3a"></circle><circle cx="420.2" cy="464.0" r="2.3" fill="#5a9e3a"></circle><circle cx="427.7" cy="470.7" r="2.3" fill="#5a9e3a"></circle><circle cx="450.1" cy="468.3" r="2.3" fill="#5a9e3a"></circle><circle cx="472.5" cy="466.8" r="2.3" fill="#5a9e3a"></circle><circle cx="495.0" cy="465.9" r="2.3" fill="#5a9e3a"></circle><circle cx="517.4" cy="462.7" r="2.3" fill="#5a9e3a"></circle><circle cx="539.8" cy="464.2" r="2.3" fill="#5a9e3a"></circle><circle cx="562.3" cy="469.8" r="2.3" fill="#5a9e3a"></circle><circle cx="584.7" cy="462.7" r="2.3" fill="#5a9e3a"></circle><circle cx="607.1" cy="463.6" r="2.3" fill="#5a9e3a"></circle><circle cx="629.6" cy="461.7" r="2.3" fill="#5a9e3a"></circle><circle cx="652.0" cy="463.6" r="2.3" fill="#5a9e3a"></circle><circle cx="674.5" cy="461.2" r="2.3" fill="#5a9e3a"></circle><circle cx="696.9" cy="467.4" r="2.3" fill="#5a9e3a"></circle><circle cx="719.3" cy="463.6" r="2.3" fill="#5a9e3a"></circle><circle cx="741.8" cy="463.0" r="2.3" fill="#5a9e3a"></circle><circle cx="764.2" cy="463.0" r="2.3" fill="#5a9e3a"></circle><circle cx="786.6" cy="463.6" r="2.3" fill="#5a9e3a"></circle><circle cx="809.1" cy="464.9" r="2.3" fill="#5a9e3a"></circle><circle cx="854.0" cy="465.9" r="2.3" fill="#5a9e3a"></circle><circle cx="861.4" cy="462.7" r="2.3" fill="#5a9e3a"></circle><circle cx="883.9" cy="464.5" r="2.3" fill="#5a9e3a"></circle><circle cx="906.3" cy="462.7" r="2.3" fill="#5a9e3a"></circle><circle cx="928.7" cy="464.5" r="2.3" fill="#5a9e3a"></circle><circle cx="973.6" cy="463.6" r="2.3" fill="#5a9e3a"></circle><circle cx="1018.5" cy="463.6" r="2.3" fill="#5a9e3a"></circle><circle cx="1040.9" cy="460.8" r="2.3" fill="#5a9e3a"></circle><circle cx="1063.4" cy="462.7" r="2.3" fill="#5a9e3a"></circle><circle cx="1085.8" cy="465.5" r="2.3" fill="#5a9e3a"></circle><circle cx="1108.2" cy="463.6" r="2.3" fill="#5a9e3a"></circle><circle cx="1153.1" cy="463.6" r="2.3" fill="#5a9e3a"></circle><circle cx="1183.0" cy="402.0" r="2.3" fill="#5a9e3a"></circle><circle cx="1190.5" cy="411.0" r="2.3" fill="#5a9e3a"></circle><circle cx="1198.0" cy="452.7" r="2.3" fill="#5a9e3a"></circle><circle cx="1220.4" cy="462.0" r="2.3" fill="#5a9e3a"></circle><circle cx="1265.3" cy="460.0" r="2.3" fill="#5a9e3a"></circle><circle cx="1287.7" cy="464.5" r="2.3" fill="#5a9e3a"></circle><circle cx="1310.2" cy="455.0" r="2.3" fill="#5a9e3a"></circle><circle cx="1332.6" cy="463.7" r="2.3" fill="#5a9e3a"></circle><circle cx="1355.0" cy="460.6" r="2.3" fill="#5a9e3a"></circle><circle cx="1377.5" cy="467.0" r="2.3" fill="#5a9e3a"></circle><circle cx="1399.9" cy="466.0" r="2.3" fill="#5a9e3a"></circle><circle cx="1422.4" cy="464.5" r="2.3" fill="#5a9e3a"></circle><circle cx="1444.8" cy="461.4" r="2.3" fill="#5a9e3a"></circle></g><g opacity="0.13"><path d="M375.3 467.4 L397.7 463.6 L420.2 463.6 L427.7 460.8 L450.1 462.7 L472.5 459.8 L495.0 454.2 L517.4 467.4 L539.8 462.7 L562.3 464.5 L584.7 460.8 L607.1 459.8 L629.6 458.9 L652.0 458.5 L674.5 459.8 L696.9 462.7 L719.3 463.6 L741.8 466.4 L764.2 462.7 L786.6 461.7 L809.1 460.8 L854.0 453.3 L861.4 460.8 L883.9 468.3 L906.3 458.9 L928.7 463.6 L973.6 461.7 L1018.5 464.5 L1063.4 458.9 L1108.2 466.4 L1153.1 460.8 L1190.5 440.0 L1205.5 420.5 L1220.4 466.0 L1265.3 462.0 L1287.7 466.0 L1310.2 456.0 L1332.6 461.0 L1355.0 458.0 L1377.5 453.4 L1399.9 470.6 L1422.4 469.4 L1444.8 466.8" fill="none" stroke="#d9df4a" stroke-width="1.4"></path><circle cx="375.3" cy="467.4" r="2.3" fill="#d9df4a"></circle><circle cx="397.7" cy="463.6" r="2.3" fill="#d9df4a"></circle><circle cx="420.2" cy="463.6" r="2.3" fill="#d9df4a"></circle><circle cx="427.7" cy="460.8" r="2.3" fill="#d9df4a"></circle><circle cx="450.1" cy="462.7" r="2.3" fill="#d9df4a"></circle><circle cx="472.5" cy="459.8" r="2.3" fill="#d9df4a"></circle><circle cx="495.0" cy="454.2" r="2.3" fill="#d9df4a"></circle><circle cx="517.4" cy="467.4" r="2.3" fill="#d9df4a"></circle><circle cx="539.8" cy="462.7" r="2.3" fill="#d9df4a"></circle><circle cx="562.3" cy="464.5" r="2.3" fill="#d9df4a"></circle><circle cx="584.7" cy="460.8" r="2.3" fill="#d9df4a"></circle><circle cx="607.1" cy="459.8" r="2.3" fill="#d9df4a"></circle><circle cx="629.6" cy="458.9" r="2.3" fill="#d9df4a"></circle><circle cx="652.0" cy="458.5" r="2.3" fill="#d9df4a"></circle><circle cx="674.5" cy="459.8" r="2.3" fill="#d9df4a"></circle><circle cx="696.9" cy="462.7" r="2.3" fill="#d9df4a"></circle><circle cx="719.3" cy="463.6" r="2.3" fill="#d9df4a"></circle><circle cx="741.8" cy="466.4" r="2.3" fill="#d9df4a"></circle><circle cx="764.2" cy="462.7" r="2.3" fill="#d9df4a"></circle><circle cx="786.6" cy="461.7" r="2.3" fill="#d9df4a"></circle><circle cx="809.1" cy="460.8" r="2.3" fill="#d9df4a"></circle><circle cx="854.0" cy="453.3" r="2.3" fill="#d9df4a"></circle><circle cx="861.4" cy="460.8" r="2.3" fill="#d9df4a"></circle><circle cx="883.9" cy="468.3" r="2.3" fill="#d9df4a"></circle><circle cx="906.3" cy="458.9" r="2.3" fill="#d9df4a"></circle><circle cx="928.7" cy="463.6" r="2.3" fill="#d9df4a"></circle><circle cx="973.6" cy="461.7" r="2.3" fill="#d9df4a"></circle><circle cx="1018.5" cy="464.5" r="2.3" fill="#d9df4a"></circle><circle cx="1063.4" cy="458.9" r="2.3" fill="#d9df4a"></circle><circle cx="1108.2" cy="466.4" r="2.3" fill="#d9df4a"></circle><circle cx="1153.1" cy="460.8" r="2.3" fill="#d9df4a"></circle><circle cx="1190.5" cy="440.0" r="2.3" fill="#d9df4a"></circle><circle cx="1205.5" cy="420.5" r="2.3" fill="#d9df4a"></circle><circle cx="1220.4" cy="466.0" r="2.3" fill="#d9df4a"></circle><circle cx="1265.3" cy="462.0" r="2.3" fill="#d9df4a"></circle><circle cx="1287.7" cy="466.0" r="2.3" fill="#d9df4a"></circle><circle cx="1310.2" cy="456.0" r="2.3" fill="#d9df4a"></circle><circle cx="1332.6" cy="461.0" r="2.3" fill="#d9df4a"></circle><circle cx="1355.0" cy="458.0" r="2.3" fill="#d9df4a"></circle><circle cx="1377.5" cy="453.4" r="2.3" fill="#d9df4a"></circle><circle cx="1399.9" cy="470.6" r="2.3" fill="#d9df4a"></circle><circle cx="1422.4" cy="469.4" r="2.3" fill="#d9df4a"></circle><circle cx="1444.8" cy="466.8" r="2.3" fill="#d9df4a"></circle></g><g opacity="0.09"><path d="M375.3 461.0 L397.7 460.0 L420.2 455.0 L427.7 440.0 L450.1 452.0 L472.5 450.0 L495.0 440.0 L517.4 462.0 L562.3 456.0 L584.7 455.0 L607.1 450.0 L629.6 455.1 L652.0 452.3 L674.5 454.8 L696.9 464.5 L719.3 462.7 L741.8 461.7 L764.2 460.8 L786.6 460.4 L809.1 455.1 L854.0 447.6 L861.4 462.7 L883.9 463.6 L906.3 451.0 L928.7 460.8 L951.2 455.1 L973.6 458.0 L1003.5 455.1 L1033.5 457.0 L1063.4 462.7 L1093.3 458.0 L1115.7 454.2 L1153.1 455.1 L1183.0 451.0 L1198.0 452.0 L1220.4 458.0 L1265.3 455.0 L1287.7 461.4 L1310.2 452.0 L1332.6 456.0 L1355.0 451.0 L1377.5 449.0 L1399.9 462.0 L1422.4 464.5 L1444.8 461.4" fill="none" stroke="#2456a8" stroke-width="1.4"></path><circle cx="375.3" cy="461.0" r="2.3" fill="#2456a8"></circle><circle cx="397.7" cy="460.0" r="2.3" fill="#2456a8"></circle><circle cx="420.2" cy="455.0" r="2.3" fill="#2456a8"></circle><circle cx="427.7" cy="440.0" r="2.3" fill="#2456a8"></circle><circle cx="450.1" cy="452.0" r="2.3" fill="#2456a8"></circle><circle cx="472.5" cy="450.0" r="2.3" fill="#2456a8"></circle><circle cx="495.0" cy="440.0" r="2.3" fill="#2456a8"></circle><circle cx="517.4" cy="462.0" r="2.3" fill="#2456a8"></circle><circle cx="562.3" cy="456.0" r="2.3" fill="#2456a8"></circle><circle cx="584.7" cy="455.0" r="2.3" fill="#2456a8"></circle><circle cx="607.1" cy="450.0" r="2.3" fill="#2456a8"></circle><circle cx="629.6" cy="455.1" r="2.3" fill="#2456a8"></circle><circle cx="652.0" cy="452.3" r="2.3" fill="#2456a8"></circle><circle cx="674.5" cy="454.8" r="2.3" fill="#2456a8"></circle><circle cx="696.9" cy="464.5" r="2.3" fill="#2456a8"></circle><circle cx="719.3" cy="462.7" r="2.3" fill="#2456a8"></circle><circle cx="741.8" cy="461.7" r="2.3" fill="#2456a8"></circle><circle cx="764.2" cy="460.8" r="2.3" fill="#2456a8"></circle><circle cx="786.6" cy="460.4" r="2.3" fill="#2456a8"></circle><circle cx="809.1" cy="455.1" r="2.3" fill="#2456a8"></circle><circle cx="854.0" cy="447.6" r="2.3" fill="#2456a8"></circle><circle cx="861.4" cy="462.7" r="2.3" fill="#2456a8"></circle><circle cx="883.9" cy="463.6" r="2.3" fill="#2456a8"></circle><circle cx="906.3" cy="451.0" r="2.3" fill="#2456a8"></circle><circle cx="928.7" cy="460.8" r="2.3" fill="#2456a8"></circle><circle cx="951.2" cy="455.1" r="2.3" fill="#2456a8"></circle><circle cx="973.6" cy="458.0" r="2.3" fill="#2456a8"></circle><circle cx="1003.5" cy="455.1" r="2.3" fill="#2456a8"></circle><circle cx="1033.5" cy="457.0" r="2.3" fill="#2456a8"></circle><circle cx="1063.4" cy="462.7" r="2.3" fill="#2456a8"></circle><circle cx="1093.3" cy="458.0" r="2.3" fill="#2456a8"></circle><circle cx="1115.7" cy="454.2" r="2.3" fill="#2456a8"></circle><circle cx="1153.1" cy="455.1" r="2.3" fill="#2456a8"></circle><circle cx="1183.0" cy="451.0" r="2.3" fill="#2456a8"></circle><circle cx="1198.0" cy="452.0" r="2.3" fill="#2456a8"></circle><circle cx="1220.4" cy="458.0" r="2.3" fill="#2456a8"></circle><circle cx="1265.3" cy="455.0" r="2.3" fill="#2456a8"></circle><circle cx="1287.7" cy="461.4" r="2.3" fill="#2456a8"></circle><circle cx="1310.2" cy="452.0" r="2.3" fill="#2456a8"></circle><circle cx="1332.6" cy="456.0" r="2.3" fill="#2456a8"></circle><circle cx="1355.0" cy="451.0" r="2.3" fill="#2456a8"></circle><circle cx="1377.5" cy="449.0" r="2.3" fill="#2456a8"></circle><circle cx="1399.9" cy="462.0" r="2.3" fill="#2456a8"></circle><circle cx="1422.4" cy="464.5" r="2.3" fill="#2456a8"></circle><circle cx="1444.8" cy="461.4" r="2.3" fill="#2456a8"></circle></g><path d="M375.3 459.3 L382.8 458.9 L390.3 458.3 L397.7 457.8 L405.2 456.6 L412.7 456.3 L420.2 432.0 L427.7 432.2 L435.1 454.6 L442.6 453.8 L450.1 417.9 L457.6 451.4 L465.0 451.2 L472.5 424.0 L480.0 449.7 L487.5 449.3 L495.0 408.2 L502.4 464.0 L509.9 463.4 L517.4 462.5 L524.9 461.5 L532.4 461.3 L539.8 445.2 L547.3 459.8 L554.8 459.7 L562.3 437.3 L569.8 457.6 L577.2 457.0 L584.7 456.3 L592.2 455.7 L599.7 455.3 L607.1 435.0 L614.6 454.6 L622.1 452.0 L629.6 445.2 L637.1 443.5 L644.5 450.8 L652.0 427.0 L659.5 449.1 L667.0 449.1 L674.5 447.8 L681.9 464.7 L689.4 464.0 L696.9 450.4 L704.4 462.5 L711.9 461.9 L719.3 445.0 L726.8 460.4 L734.3 460.2 L741.8 459.1 L749.2 458.0 L756.7 457.4 L764.2 437.3 L771.7 456.5 L779.2 455.7 L786.6 455.0 L794.1 454.6 L801.6 453.8 L809.1 452.7 L816.6 451.8 L846.5 431.7 L854.0 417.8 L861.4 460.0 L868.9 455.5 L876.4 465.3 L883.9 464.5 L891.4 453.5 L898.8 462.7 L906.3 462.3 L913.8 452.9 L921.3 460.8 L928.7 460.2 L936.2 452.3 L943.7 458.5 L951.2 458.5 L958.7 446.1 L966.1 456.6 L973.6 459.3 L981.1 442.4 L988.6 454.6 L996.1 454.2 L1003.5 439.9 L1011.0 452.1 L1018.5 451.8 L1026.0 435.6 L1033.5 449.7 L1040.9 452.3 L1048.4 425.8 L1055.9 463.8 L1063.4 462.7 L1070.8 457.8 L1078.3 461.3 L1085.8 460.2 L1093.3 452.0 L1100.8 458.5 L1108.2 458.0 L1115.7 444.4 L1123.2 456.1 L1130.7 455.9 L1138.2 443.8 L1145.6 431.8 L1153.1 454.0 L1175.6 367.3 L1183.0 392.2 L1190.5 405.7 L1198.0 329.2 L1205.5 249.0 L1212.9 430.3 L1220.4 462.6 L1227.9 462.3 L1235.4 448.1 L1242.9 461.0 L1250.3 453.0 L1257.8 459.5 L1265.3 453.7 L1272.8 458.0 L1280.3 443.3 L1287.7 456.0 L1295.2 449.2 L1302.7 455.4 L1310.2 425.9 L1317.7 453.4 L1325.1 437.2 L1332.6 452.2 L1347.6 418.8 L1355.0 428.8 L1362.5 449.4 L1377.5 384.6 L1392.4 407.3 L1399.9 462.5 L1407.4 461.4 L1414.9 455.5 L1422.4 460.3 L1429.8 449.2 L1437.3 459.1 L1444.8 436.3" fill="none" stroke="#3fcaf8" stroke-width="1.4" stroke-linejoin="round"></path><circle cx="375.3" cy="459.3" r="2.5" fill="#3db9ea"></circle><circle cx="382.8" cy="458.9" r="2.5" fill="#3db9ea"></circle><circle cx="390.3" cy="458.3" r="2.5" fill="#3db9ea"></circle><circle cx="397.7" cy="457.8" r="2.5" fill="#3db9ea"></circle><circle cx="405.2" cy="456.6" r="2.5" fill="#3db9ea"></circle><circle cx="412.7" cy="456.3" r="2.5" fill="#3db9ea"></circle><circle cx="420.2" cy="432.0" r="2.5" fill="#3db9ea"></circle><circle cx="427.7" cy="432.2" r="2.5" fill="#3db9ea"></circle><circle cx="435.1" cy="454.6" r="2.5" fill="#3db9ea"></circle><circle cx="442.6" cy="453.8" r="2.5" fill="#3db9ea"></circle><circle cx="450.1" cy="417.9" r="2.5" fill="#3db9ea"></circle><circle cx="457.6" cy="451.4" r="2.5" fill="#3db9ea"></circle><circle cx="465.0" cy="451.2" r="2.5" fill="#3db9ea"></circle><circle cx="472.5" cy="424.0" r="2.5" fill="#3db9ea"></circle><circle cx="480.0" cy="449.7" r="2.5" fill="#3db9ea"></circle><circle cx="487.5" cy="449.3" r="2.5" fill="#3db9ea"></circle><circle cx="495.0" cy="408.2" r="2.5" fill="#3db9ea"></circle><circle cx="502.4" cy="464.0" r="2.5" fill="#3db9ea"></circle><circle cx="509.9" cy="463.4" r="2.5" fill="#3db9ea"></circle><circle cx="517.4" cy="462.5" r="2.5" fill="#3db9ea"></circle><circle cx="524.9" cy="461.5" r="2.5" fill="#3db9ea"></circle><circle cx="532.4" cy="461.3" r="2.5" fill="#3db9ea"></circle><circle cx="539.8" cy="445.2" r="2.5" fill="#3db9ea"></circle><circle cx="547.3" cy="459.8" r="2.5" fill="#3db9ea"></circle><circle cx="554.8" cy="459.7" r="2.5" fill="#3db9ea"></circle><circle cx="562.3" cy="437.3" r="2.5" fill="#3db9ea"></circle><circle cx="569.8" cy="457.6" r="2.5" fill="#3db9ea"></circle><circle cx="577.2" cy="457.0" r="2.5" fill="#3db9ea"></circle><circle cx="584.7" cy="456.3" r="2.5" fill="#3db9ea"></circle><circle cx="592.2" cy="455.7" r="2.5" fill="#3db9ea"></circle><circle cx="599.7" cy="455.3" r="2.5" fill="#3db9ea"></circle><circle cx="607.1" cy="435.0" r="2.5" fill="#3db9ea"></circle><circle cx="614.6" cy="454.6" r="2.5" fill="#3db9ea"></circle><circle cx="622.1" cy="452.0" r="2.5" fill="#3db9ea"></circle><circle cx="629.6" cy="445.2" r="2.5" fill="#3db9ea"></circle><circle cx="637.1" cy="443.5" r="2.5" fill="#3db9ea"></circle><circle cx="644.5" cy="450.8" r="2.5" fill="#3db9ea"></circle><circle cx="652.0" cy="427.0" r="2.5" fill="#3db9ea"></circle><circle cx="659.5" cy="449.1" r="2.5" fill="#3db9ea"></circle><circle cx="667.0" cy="449.1" r="2.5" fill="#3db9ea"></circle><circle cx="674.5" cy="447.8" r="2.5" fill="#3db9ea"></circle><circle cx="681.9" cy="464.7" r="2.5" fill="#3db9ea"></circle><circle cx="689.4" cy="464.0" r="2.5" fill="#3db9ea"></circle><circle cx="696.9" cy="450.4" r="2.5" fill="#3db9ea"></circle><circle cx="704.4" cy="462.5" r="2.5" fill="#3db9ea"></circle><circle cx="711.9" cy="461.9" r="2.5" fill="#3db9ea"></circle><circle cx="719.3" cy="445.0" r="2.5" fill="#3db9ea"></circle><circle cx="726.8" cy="460.4" r="2.5" fill="#3db9ea"></circle><circle cx="734.3" cy="460.2" r="2.5" fill="#3db9ea"></circle><circle cx="741.8" cy="459.1" r="2.5" fill="#3db9ea"></circle><circle cx="749.2" cy="458.0" r="2.5" fill="#3db9ea"></circle><circle cx="756.7" cy="457.4" r="2.5" fill="#3db9ea"></circle><circle cx="764.2" cy="437.3" r="2.5" fill="#3db9ea"></circle><circle cx="771.7" cy="456.5" r="2.5" fill="#3db9ea"></circle><circle cx="779.2" cy="455.7" r="2.5" fill="#3db9ea"></circle><circle cx="786.6" cy="455.0" r="2.5" fill="#3db9ea"></circle><circle cx="794.1" cy="454.6" r="2.5" fill="#3db9ea"></circle><circle cx="801.6" cy="453.8" r="2.5" fill="#3db9ea"></circle><circle cx="809.1" cy="452.7" r="2.5" fill="#3db9ea"></circle><circle cx="816.6" cy="451.8" r="2.5" fill="#3db9ea"></circle><circle cx="846.5" cy="431.7" r="2.5" fill="#3db9ea"></circle><circle cx="854.0" cy="417.8" r="2.5" fill="#3db9ea"></circle><circle cx="861.4" cy="460.0" r="2.5" fill="#3db9ea"></circle><circle cx="868.9" cy="455.5" r="2.5" fill="#3db9ea"></circle><circle cx="876.4" cy="465.3" r="2.5" fill="#3db9ea"></circle><circle cx="883.9" cy="464.5" r="2.5" fill="#3db9ea"></circle><circle cx="891.4" cy="453.5" r="2.5" fill="#3db9ea"></circle><circle cx="898.8" cy="462.7" r="2.5" fill="#3db9ea"></circle><circle cx="906.3" cy="462.3" r="2.5" fill="#3db9ea"></circle><circle cx="913.8" cy="452.9" r="2.5" fill="#3db9ea"></circle><circle cx="921.3" cy="460.8" r="2.5" fill="#3db9ea"></circle><circle cx="928.7" cy="460.2" r="2.5" fill="#3db9ea"></circle><circle cx="936.2" cy="452.3" r="2.5" fill="#3db9ea"></circle><circle cx="943.7" cy="458.5" r="2.5" fill="#3db9ea"></circle><circle cx="951.2" cy="458.5" r="2.5" fill="#3db9ea"></circle><circle cx="958.7" cy="446.1" r="2.5" fill="#3db9ea"></circle><circle cx="966.1" cy="456.6" r="2.5" fill="#3db9ea"></circle><circle cx="973.6" cy="459.3" r="2.5" fill="#3db9ea"></circle><circle cx="981.1" cy="442.4" r="2.5" fill="#3db9ea"></circle><circle cx="988.6" cy="454.6" r="2.5" fill="#3db9ea"></circle><circle cx="996.1" cy="454.2" r="2.5" fill="#3db9ea"></circle><circle cx="1003.5" cy="439.9" r="2.5" fill="#3db9ea"></circle><circle cx="1011.0" cy="452.1" r="2.5" fill="#3db9ea"></circle><circle cx="1018.5" cy="451.8" r="2.5" fill="#3db9ea"></circle><circle cx="1026.0" cy="435.6" r="2.5" fill="#3db9ea"></circle><circle cx="1033.5" cy="449.7" r="2.5" fill="#3db9ea"></circle><circle cx="1040.9" cy="452.3" r="2.5" fill="#3db9ea"></circle><circle cx="1048.4" cy="425.8" r="2.5" fill="#3db9ea"></circle><circle cx="1055.9" cy="463.8" r="2.5" fill="#3db9ea"></circle><circle cx="1063.4" cy="462.7" r="2.5" fill="#3db9ea"></circle><circle cx="1070.8" cy="457.8" r="2.5" fill="#3db9ea"></circle><circle cx="1078.3" cy="461.3" r="2.5" fill="#3db9ea"></circle><circle cx="1085.8" cy="460.2" r="2.5" fill="#3db9ea"></circle><circle cx="1093.3" cy="452.0" r="2.5" fill="#3db9ea"></circle><circle cx="1100.8" cy="458.5" r="2.5" fill="#3db9ea"></circle><circle cx="1108.2" cy="458.0" r="2.5" fill="#3db9ea"></circle><circle cx="1115.7" cy="444.4" r="2.5" fill="#3db9ea"></circle><circle cx="1123.2" cy="456.1" r="2.5" fill="#3db9ea"></circle><circle cx="1130.7" cy="455.9" r="2.5" fill="#3db9ea"></circle><circle cx="1138.2" cy="443.8" r="2.5" fill="#3db9ea"></circle><circle cx="1145.6" cy="431.8" r="2.5" fill="#3db9ea"></circle><circle cx="1153.1" cy="454.0" r="2.5" fill="#3db9ea"></circle><circle cx="1175.6" cy="367.3" r="2.5" fill="#3db9ea"></circle><circle cx="1183.0" cy="392.2" r="2.5" fill="#3db9ea"></circle><circle cx="1190.5" cy="405.7" r="2.5" fill="#3db9ea"></circle><circle cx="1198.0" cy="329.2" r="2.5" fill="#3db9ea"></circle><circle cx="1205.5" cy="249.0" r="2.5" fill="#3db9ea"></circle><circle cx="1212.9" cy="430.3" r="2.5" fill="#3db9ea"></circle><circle cx="1220.4" cy="462.6" r="2.5" fill="#3db9ea"></circle><circle cx="1227.9" cy="462.3" r="2.5" fill="#3db9ea"></circle><circle cx="1235.4" cy="448.1" r="2.5" fill="#3db9ea"></circle><circle cx="1242.9" cy="461.0" r="2.5" fill="#3db9ea"></circle><circle cx="1250.3" cy="453.0" r="2.5" fill="#3db9ea"></circle><circle cx="1257.8" cy="459.5" r="2.5" fill="#3db9ea"></circle><circle cx="1265.3" cy="453.7" r="2.5" fill="#3db9ea"></circle><circle cx="1272.8" cy="458.0" r="2.5" fill="#3db9ea"></circle><circle cx="1280.3" cy="443.3" r="2.5" fill="#3db9ea"></circle><circle cx="1287.7" cy="456.0" r="2.5" fill="#3db9ea"></circle><circle cx="1295.2" cy="449.2" r="2.5" fill="#3db9ea"></circle><circle cx="1302.7" cy="455.4" r="2.5" fill="#3db9ea"></circle><circle cx="1310.2" cy="425.9" r="2.5" fill="#3db9ea"></circle><circle cx="1317.7" cy="453.4" r="2.5" fill="#3db9ea"></circle><circle cx="1325.1" cy="437.2" r="2.5" fill="#3db9ea"></circle><circle cx="1332.6" cy="452.2" r="2.5" fill="#3db9ea"></circle><circle cx="1347.6" cy="418.8" r="2.5" fill="#3db9ea"></circle><circle cx="1355.0" cy="428.8" r="2.5" fill="#3db9ea"></circle><circle cx="1362.5" cy="449.4" r="2.5" fill="#3db9ea"></circle><circle cx="1377.5" cy="384.6" r="2.5" fill="#3db9ea"></circle><circle cx="1392.4" cy="407.3" r="2.5" fill="#3db9ea"></circle><circle cx="1399.9" cy="462.5" r="2.5" fill="#3db9ea"></circle><circle cx="1407.4" cy="461.4" r="2.5" fill="#3db9ea"></circle><circle cx="1414.9" cy="455.5" r="2.5" fill="#3db9ea"></circle><circle cx="1422.4" cy="460.3" r="2.5" fill="#3db9ea"></circle><circle cx="1429.8" cy="449.2" r="2.5" fill="#3db9ea"></circle><circle cx="1437.3" cy="459.1" r="2.5" fill="#3db9ea"></circle><circle cx="1444.8" cy="436.3" r="2.5" fill="#3db9ea"></circle><path d="M354.6 226.3 V482.4 M354.6 482.4 H1466.6" stroke="#5d6068" stroke-width="1" fill="none"></path><path d="M350.2 226.3 H354.6" stroke="#5d6068" stroke-width="1"></path><path d="M350.2 262.8 H354.6" stroke="#5d6068" stroke-width="1"></path><path d="M350.2 299.3 H354.6" stroke="#5d6068" stroke-width="1"></path><path d="M350.2 335.8 H354.6" stroke="#5d6068" stroke-width="1"></path><path d="M350.2 372.3 H354.6" stroke="#5d6068" stroke-width="1"></path><path d="M350.2 408.8 H354.6" stroke="#5d6068" stroke-width="1"></path><path d="M350.2 445.3 H354.6" stroke="#5d6068" stroke-width="1"></path><path d="M350.2 481.8 H354.6" stroke="#5d6068" stroke-width="1"></path><path d="M354.6 482.4 V486" stroke="#5d6068" stroke-width="1"></path><path d="M554.8 482.4 V486" stroke="#5d6068" stroke-width="1"></path><path d="M734.3 482.4 V486" stroke="#5d6068" stroke-width="1"></path><path d="M913.8 482.4 V486" stroke="#5d6068" stroke-width="1"></path><path d="M1093.3 482.4 V486" stroke="#5d6068" stroke-width="1"></path><path d="M1272.8 482.4 V486" stroke="#5d6068" stroke-width="1"></path><path d="M1466.3 482.4 V486" stroke="#5d6068" stroke-width="1"></path><rect x="356.5" y="502.9" width="1111.5" height="6" fill="#d8dff0"></rect><rect x="356.5" y="508.8" width="1111.5" height="22.9" fill="#e4ebfd"></rect><path d="M356.5 531.7 L356.5 526.6 L363.1 527.2 L370.9 527.2 L378.7 527.1 L386.5 527.1 L394.3 527.0 L402.1 527.0 L409.9 525.3 L417.7 525.3 L425.5 526.9 L433.3 526.8 L441.1 524.3 L448.9 526.6 L456.7 526.6 L464.5 524.7 L472.3 526.5 L480.1 526.5 L487.9 523.6 L495.7 527.5 L503.6 527.5 L511.4 527.4 L519.2 527.3 L527.0 527.3 L534.8 526.2 L542.6 527.2 L550.4 527.2 L558.2 525.6 L566.0 527.1 L573.8 527.0 L581.6 527.0 L589.4 526.9 L597.2 526.9 L605.0 525.5 L612.8 526.9 L620.6 526.7 L628.4 526.2 L636.2 526.1 L644.0 526.6 L651.8 524.9 L659.6 526.5 L667.4 526.5 L675.2 526.4 L683.0 527.6 L690.8 527.5 L698.6 526.6 L706.4 527.4 L714.2 527.4 L722.0 526.2 L729.8 527.3 L737.6 527.2 L745.4 527.2 L753.2 527.1 L761.0 527.0 L768.8 525.6 L776.6 527.0 L784.4 526.9 L792.2 526.9 L800.0 526.9 L807.8 526.8 L815.6 526.7 L823.4 526.7 L854.6 525.2 L862.4 524.3 L870.2 527.2 L878.1 526.9 L885.9 527.6 L893.7 527.5 L901.5 526.8 L909.3 527.4 L917.1 527.4 L924.9 526.7 L932.7 527.3 L940.5 527.2 L948.3 526.7 L956.1 527.1 L963.9 527.1 L971.7 526.3 L979.5 527.0 L987.3 527.2 L995.1 526.0 L1002.9 526.9 L1010.7 526.8 L1018.5 525.8 L1026.3 526.7 L1034.1 526.7 L1041.9 525.5 L1049.7 526.5 L1057.5 526.7 L1065.3 524.8 L1073.1 527.5 L1080.9 527.4 L1088.7 527.1 L1096.5 527.3 L1104.3 527.2 L1112.1 526.7 L1119.9 527.1 L1127.7 527.1 L1135.5 526.1 L1143.3 527.0 L1151.1 526.9 L1158.9 526.1 L1166.7 525.3 L1174.5 526.8 L1197.9 520.7 L1205.7 522.5 L1213.5 523.4 L1221.3 518.1 L1229.1 512.5 L1236.9 525.2 L1244.7 527.4 L1252.6 527.4 L1260.4 526.4 L1268.2 527.3 L1276.0 526.7 L1283.8 527.2 L1291.6 526.8 L1299.4 527.1 L1307.2 526.1 L1315.0 527.0 L1322.8 526.5 L1330.6 526.9 L1338.4 524.8 L1346.2 526.8 L1354.0 525.6 L1361.8 526.7 L1377.4 524.3 L1385.2 525.0 L1393.0 526.5 L1408.6 522.0 L1424.2 523.5 L1432.0 527.4 L1439.8 527.3 L1447.6 526.9 L1455.4 527.3 L1463.2 526.5 L1468 526.6 L1468 531.7 Z" fill="#cedaf9" stroke="#b3c4f6" stroke-width="0.8"></path><path d="M356.9 508.2 V531.7 M1467.7 508.2 V531.7" stroke="#b4c3f0" stroke-width="0.8"></path><rect x="354.8" y="512.6" width="4.2" height="14.8" rx="1.5" fill="#fff" stroke="#aab6d8" stroke-width="0.8"></rect><rect x="1465.4" y="512.6" width="4.2" height="14.8" rx="1.5" fill="#fff" stroke="#aab6d8" stroke-width="0.8"></rect><rect x="1517.1" y="228.3" width="23.6" height="255.5" fill="#e4ebfd"></rect><rect x="1540.7" y="228.3" width="5.1" height="255.5" fill="#d8dff0"></rect><path d="M1517.1 228.3 H1536.3 L1521.4 483.8 H1517.1 Z" fill="#cedaf9"></path><path d="M1536.3 230 L1521.4 482.5" stroke="#b3c3f4" stroke-width="0.6" stroke-dasharray="1 0.6"></path><rect x="1521.6" y="226.6" width="14.6" height="4.6" rx="1.5" fill="#fff" stroke="#aab6d8" stroke-width="0.8"></rect><rect x="1521.6" y="481" width="14.6" height="4.6" rx="1.5" fill="#fff" stroke="#aab6d8" stroke-width="0.8"></rect></svg>
<div class="t c " style="left: 409.8px; width: 1000px; text-align: center; top: 499.71px; font-size: 9.5px; line-height: 13px; color: rgb(157, 164, 186); transform: scaleX(1.021);">Date</div>
<div class="t r " style="right: 1249.4px; top: 219.91px; font-size: 9.5px; line-height: 13px; color: rgb(51, 54, 61); transform: scaleX(0.97);">3.5K</div>
<div class="t r " style="right: 1249.4px; top: 256.41px; font-size: 9.5px; line-height: 13px; color: rgb(51, 54, 61); transform: scaleX(0.97);">3K</div>
<div class="t r " style="right: 1249.4px; top: 292.91px; font-size: 9.5px; line-height: 13px; color: rgb(51, 54, 61); transform: scaleX(0.97);">2.5K</div>
<div class="t r " style="right: 1249.4px; top: 329.41px; font-size: 9.5px; line-height: 13px; color: rgb(51, 54, 61); transform: scaleX(0.97);">2K</div>
<div class="t r " style="right: 1249.4px; top: 365.91px; font-size: 9.5px; line-height: 13px; color: rgb(51, 54, 61); transform: scaleX(0.97);">1.5K</div>
<div class="t r " style="right: 1249.4px; top: 402.41px; font-size: 9.5px; line-height: 13px; color: rgb(51, 54, 61); transform: scaleX(0.97);">1K</div>
<div class="t r " style="right: 1249.4px; top: 438.91px; font-size: 9.5px; line-height: 13px; color: rgb(51, 54, 61); transform: scaleX(0.97);">500</div>
<div class="t r " style="right: 1249.4px; top: 475.41px; font-size: 9.5px; line-height: 13px; color: rgb(51, 54, 61); transform: scaleX(0.97);">0</div>
<div class="t c " style="left: -146.2px; width: 1000px; text-align: center; top: 487.01px; font-size: 9.5px; line-height: 13px; color: rgb(51, 54, 61); transform: scaleX(1.0637);">10-Jun 21:08</div>
<div class="t c " style="left: 54.8px; width: 1000px; text-align: center; top: 487.01px; font-size: 9.5px; line-height: 13px; color: rgb(51, 54, 61); transform: scaleX(1.0853);">12-Jun 00:00</div>
<div class="t c " style="left: 234.3px; width: 1000px; text-align: center; top: 487.01px; font-size: 9.5px; line-height: 13px; color: rgb(51, 54, 61); transform: scaleX(1.0853);">13-Jun 00:00</div>
<div class="t c " style="left: 413.8px; width: 1000px; text-align: center; top: 487.01px; font-size: 9.5px; line-height: 13px; color: rgb(51, 54, 61); transform: scaleX(1.0853);">14-Jun 00:00</div>
<div class="t c " style="left: 593.3px; width: 1000px; text-align: center; top: 487.01px; font-size: 9.5px; line-height: 13px; color: rgb(51, 54, 61); transform: scaleX(1.0853);">15-Jun 00:00</div>
<div class="t c " style="left: 772.8px; width: 1000px; text-align: center; top: 487.01px; font-size: 9.5px; line-height: 13px; color: rgb(51, 54, 61); transform: scaleX(1.0853);">16-Jun 00:00</div>
<div class="t c " style="left: 966.3px; width: 1000px; text-align: center; top: 487.01px; font-size: 9.5px; line-height: 13px; color: rgb(51, 54, 61); transform: scaleX(1.0637);">17-Jun 01:51</div>
<div class="abs" style="left:272.2px;top:346.4px;width:100px;height:14px;transform:rotate(-90deg);text-align:center;font-size:9.5px;line-height:14px;color:#33363d;white-space:nowrap"><span id="ytitle" style="display:inline-block">Total Runtime (s)</span></div>
<div class="abs" style="left:1218px;top:260.7px;width:202.8px;height:86.5px;background:#46bfeb;box-shadow:0 1px 3px rgba(0,0,0,.18)"></div>
<div class="t " style="left: 1227.9px; top: 271.79px; font-size: 11px; line-height: 15px; color: rgb(255, 255, 255); transform: scaleX(0.9906);"><b>User</b>: DBT_TRANSFORM_USER</div>
<div class="t " style="left: 1227.9px; top: 288.69px; font-size: 11px; line-height: 15px; color: rgb(255, 255, 255); transform: scaleX(1.0432);"><b>Runtime</b>: 3,182.4 seconds</div>
<div class="t " style="left: 1227.9px; top: 305.29px; font-size: 11px; line-height: 15px; color: rgb(255, 255, 255); transform: scaleX(1.0592);"><b>Table</b>: analytics:prod_stage.events</div>
<div class="t " style="left: 1227.9px; top: 321.79px; font-size: 11px; line-height: 15px; color: rgb(255, 255, 255); transform: scaleX(1.0612);"><b>Start time</b>: 15-Jun 15:00</div>
<div class="t b" style="left: 297.3px; top: 563.66px; font-size: 10.5px; line-height: 15px; color: rgb(47, 55, 70); transform: scaleX(0.9486);">Query</div>
<div class="t b" style="left: 470.4px; top: 563.66px; font-size: 10.5px; line-height: 15px; color: rgb(47, 55, 70); transform: scaleX(0.9632);">User</div>
<div class="t b" style="left: 603.9px; top: 563.66px; font-size: 10.5px; line-height: 15px; color: rgb(47, 55, 70); transform: scaleX(0.964);">Queries</div>
<div class="t b" style="left: 728.5px; top: 563.66px; font-size: 10.5px; line-height: 15px; color: rgb(47, 55, 70); transform: scaleX(0.951);">Avg Runtime (s)</div>
<div class="t b" style="left: 853.2px; top: 563.66px; font-size: 10.5px; line-height: 15px; color: rgb(47, 55, 70); transform: scaleX(0.968);">Max Runtime (s)</div>
<div class="t b" style="left: 977.8px; top: 563.66px; font-size: 10.5px; line-height: 15px; color: rgb(47, 55, 70); transform: scaleX(0.9672);">Total Runtime (s)</div>
<div class="t b" style="left: 1102.3px; top: 563.66px; font-size: 10.5px; line-height: 15px; color: rgb(47, 55, 70); transform: scaleX(0.9679);">Table</div>
<div class="t b" style="left: 1300.2px; top: 563.66px; font-size: 10.5px; line-height: 15px; color: rgb(47, 55, 70); transform: scaleX(0.9814);">Snowflake Warehouse</div>
<div class="t b" style="left: 1425.3px; top: 554.56px; font-size: 10.5px; line-height: 15px; color: rgb(47, 55, 70); transform: scaleX(0.9769);">Snowflake Warehouse</div>
<div class="t b" style="left: 1425.3px; top: 572.86px; font-size: 10.5px; line-height: 15px; color: rgb(47, 55, 70); transform: scaleX(0.9659);">Size</div>
<div class="abs" style="left:274px;top:593px;width:1272px;height:1px;background:#4a5363"></div>
<div class="row" style="top:594px;height:28px;background:#e9eef3;"></div>
<div class="dot" style="top:601.1px;background:#40c1f0"></div>
<div class="code" style="top:596.9px"></div>
<div class="t mono" style="left: 300.7px; top: 601.13px; font-size: 10px; line-height: 14px; color: rgb(43, 47, 56); transform: scaleX(1.0541);">create or replace tran…</div>
<div class="t " style="left: 470.4px; top: 599.86px; font-size: 10.5px; line-height: 15px; color: rgb(45, 55, 72); transform: scaleX(0.9497);">DBT_TRANSFORM_USER</div>
<div class="t " style="left: 603.9px; top: 599.86px; font-size: 10.5px; line-height: 15px; color: rgb(45, 55, 72); transform: scaleX(0.96);">139</div>
<div class="t " style="left: 728.5px; top: 599.86px; font-size: 10.5px; line-height: 15px; color: rgb(45, 55, 72); transform: scaleX(0.99);">470.7</div>
<div class="t " style="left: 853.2px; top: 599.86px; font-size: 10.5px; line-height: 15px; color: rgb(45, 55, 72); transform: scaleX(0.98);">3,182.4</div>
<div class="t " style="left: 977.8px; top: 599.86px; font-size: 10.5px; line-height: 15px; color: rgb(45, 55, 72); transform: scaleX(0.98);">65,431.0</div>
<div class="t " style="left: 1102.3px; top: 599.86px; font-size: 10.5px; line-height: 15px; color: rgb(43, 133, 192); transform: scaleX(1.0325);">analytics:prod_stage.events</div>
<div class="t " style="left: 1300.2px; top: 599.56px; font-size: 10.5px; line-height: 15px; color: rgb(45, 55, 72); transform: scaleX(0.9851);">TRANSFORMING_2</div>
<div class="t " style="left: 1425.3px; top: 599.56px; font-size: 10.5px; line-height: 15px; color: rgb(45, 55, 72); transform: scaleX(0.9941);">Large</div>
<div class="row" style="top:622px;height:29px;"></div>
<div class="dot" style="top:629.3px;background:#434b8c"></div>
<div class="code" style="top:625.1px"></div>
<div class="t mono" style="left: 300.7px; top: 629.34px; font-size: 10px; line-height: 14px; color: rgb(43, 47, 56); transform: scaleX(1.0541);">create or replace tran…</div>
<div class="t " style="left: 470.4px; top: 628.06px; font-size: 10.5px; line-height: 15px; color: rgb(45, 55, 72); transform: scaleX(0.9497);">DBT_TRANSFORM_USER</div>
<div class="t " style="left: 603.9px; top: 628.06px; font-size: 10.5px; line-height: 15px; color: rgb(45, 55, 72); transform: scaleX(0.96);">139</div>
<div class="t " style="left: 728.5px; top: 628.06px; font-size: 10.5px; line-height: 15px; color: rgb(45, 55, 72); transform: scaleX(0.99);">341.6</div>
<div class="t " style="left: 853.2px; top: 628.06px; font-size: 10.5px; line-height: 15px; color: rgb(45, 55, 72); transform: scaleX(0.98);">2,822.3</div>
<div class="t " style="left: 977.8px; top: 628.06px; font-size: 10.5px; line-height: 15px; color: rgb(45, 55, 72); transform: scaleX(0.98);">47,483.5</div>
<div class="t " style="left: 1102.3px; top: 628.06px; font-size: 10.5px; line-height: 15px; color: rgb(43, 133, 192); transform: scaleX(1.0313);">analytics:prod_stage.anomalies</div>
<div class="t " style="left: 1300.2px; top: 627.76px; font-size: 10.5px; line-height: 15px; color: rgb(45, 55, 72); transform: scaleX(0.9851);">TRANSFORMING_2</div>
<div class="t " style="left: 1425.3px; top: 627.76px; font-size: 10.5px; line-height: 15px; color: rgb(45, 55, 72); transform: scaleX(0.9941);">Large</div>
<div class="row" style="top:651px;height:28px;"></div>
<div class="dot" style="top:657.5px;background:#3aa8ab"></div>
<div class="code" style="top:653.3px"></div>
<div class="t mono" style="left: 300.7px; top: 657.53px; font-size: 10px; line-height: 14px; color: rgb(43, 47, 56); transform: scaleX(1.0541);">create or replace tran…</div>
<div class="t " style="left: 470.4px; top: 656.26px; font-size: 10.5px; line-height: 15px; color: rgb(45, 55, 72); transform: scaleX(0.9497);">DBT_TRANSFORM_USER</div>
<div class="t " style="left: 603.9px; top: 656.26px; font-size: 10.5px; line-height: 15px; color: rgb(45, 55, 72); transform: scaleX(0.96);">49</div>
<div class="t " style="left: 728.5px; top: 656.26px; font-size: 10.5px; line-height: 15px; color: rgb(45, 55, 72); transform: scaleX(0.99);">667.1</div>
<div class="t " style="left: 853.2px; top: 656.26px; font-size: 10.5px; line-height: 15px; color: rgb(45, 55, 72); transform: scaleX(0.98);">1,554.0</div>
<div class="t " style="left: 977.8px; top: 656.26px; font-size: 10.5px; line-height: 15px; color: rgb(45, 55, 72); transform: scaleX(0.98);">32,686.4</div>
<div class="t " style="left: 1102.3px; top: 656.26px; font-size: 10.5px; line-height: 15px; color: rgb(43, 133, 192); transform: scaleX(1.0335);">analytics:prod_stage.columns_lineage</div>
<div class="t " style="left: 1300.2px; top: 655.96px; font-size: 10.5px; line-height: 15px; color: rgb(45, 55, 72); transform: scaleX(0.9851);">TRANSFORMING_2</div>
<div class="t " style="left: 1425.3px; top: 655.96px; font-size: 10.5px; line-height: 15px; color: rgb(45, 55, 72); transform: scaleX(0.9941);">Large</div>
<div class="row" style="top:679px;height:28px;"></div>
<div class="dot" style="top:685.7px;background:#9b45a6"></div>
<div class="code" style="top:681.5px"></div>
<div class="t mono" style="left: 300.7px; top: 685.74px; font-size: 10px; line-height: 14px; color: rgb(43, 47, 56); transform: scaleX(1.0541);">create or replace tran…</div>
<div class="t " style="left: 470.4px; top: 684.46px; font-size: 10.5px; line-height: 15px; color: rgb(45, 55, 72); transform: scaleX(0.9497);">DBT_TRANSFORM_USER</div>
<div class="t " style="left: 603.9px; top: 684.46px; font-size: 10.5px; line-height: 15px; color: rgb(45, 55, 72); transform: scaleX(0.96);">49</div>
<div class="t " style="left: 728.5px; top: 684.46px; font-size: 10.5px; line-height: 15px; color: rgb(45, 55, 72); transform: scaleX(0.99);">570.5</div>
<div class="t " style="left: 853.2px; top: 684.46px; font-size: 10.5px; line-height: 15px; color: rgb(45, 55, 72); transform: scaleX(0.98);">1,027.3</div>
<div class="t " style="left: 977.8px; top: 684.46px; font-size: 10.5px; line-height: 15px; color: rgb(45, 55, 72); transform: scaleX(0.98);">27,952.5</div>
<div class="t " style="left: 1102.3px; top: 684.46px; font-size: 10.5px; line-height: 15px; color: rgb(43, 133, 192); transform: scaleX(1.0529);">analytics:prod.incident_flow</div>
<div class="t " style="left: 1300.2px; top: 684.16px; font-size: 10.5px; line-height: 15px; color: rgb(45, 55, 72); transform: scaleX(0.9851);">TRANSFORMING_2</div>
<div class="t " style="left: 1425.3px; top: 684.16px; font-size: 10.5px; line-height: 15px; color: rgb(45, 55, 72); transform: scaleX(0.9941);">Large</div>
<div class="row" style="top:707px;height:28px;"></div>
<div class="dot" style="top:713.9px;background:#f0883a"></div>
<div class="code" style="top:709.7px"></div>
<div class="t mono" style="left: 300.7px; top: 713.93px; font-size: 10px; line-height: 14px; color: rgb(43, 47, 56); transform: scaleX(1.0541);">create or replace tran…</div>
<div class="t " style="left: 470.4px; top: 712.66px; font-size: 10.5px; line-height: 15px; color: rgb(45, 55, 72); transform: scaleX(0.9497);">DBT_TRANSFORM_USER</div>
<div class="t " style="left: 603.9px; top: 712.66px; font-size: 10.5px; line-height: 15px; color: rgb(45, 55, 72); transform: scaleX(0.96);">50</div>
<div class="t " style="left: 728.5px; top: 712.66px; font-size: 10.5px; line-height: 15px; color: rgb(45, 55, 72); transform: scaleX(0.99);">464.2</div>
<div class="t " style="left: 853.2px; top: 712.66px; font-size: 10.5px; line-height: 15px; color: rgb(45, 55, 72); transform: scaleX(0.98);">1,447.9</div>
<div class="t " style="left: 977.8px; top: 712.66px; font-size: 10.5px; line-height: 15px; color: rgb(45, 55, 72); transform: scaleX(0.98);">23,211.8</div>
<div class="t " style="left: 1102.3px; top: 712.66px; font-size: 10.5px; line-height: 15px; color: rgb(43, 133, 192); transform: scaleX(1.0389);">analytics:prod_stage.tables</div>
<div class="t " style="left: 1300.2px; top: 712.36px; font-size: 10.5px; line-height: 15px; color: rgb(45, 55, 72); transform: scaleX(0.9851);">TRANSFORMING_2</div>
<div class="t " style="left: 1425.3px; top: 712.36px; font-size: 10.5px; line-height: 15px; color: rgb(45, 55, 72); transform: scaleX(0.9941);">Large</div>
<div class="row" style="top:735px;height:28px;"></div>
<div class="dot" style="top:742.1px;background:#3b3434"></div>
<div class="code" style="top:737.9px"></div>
<div class="t mono" style="left: 300.7px; top: 742.13px; font-size: 10px; line-height: 14px; color: rgb(43, 47, 56); transform: scaleX(1.0541);">merge into analytics.p…</div>
<div class="t " style="left: 470.4px; top: 740.86px; font-size: 10.5px; line-height: 15px; color: rgb(45, 55, 72); transform: scaleX(0.9497);">DBT_TRANSFORM_USER</div>
<div class="t " style="left: 603.9px; top: 740.86px; font-size: 10.5px; line-height: 15px; color: rgb(45, 55, 72); transform: scaleX(0.96);">139</div>
<div class="t " style="left: 728.5px; top: 740.86px; font-size: 10.5px; line-height: 15px; color: rgb(45, 55, 72); transform: scaleX(0.99);">130.2</div>
<div class="t " style="left: 853.2px; top: 740.86px; font-size: 10.5px; line-height: 15px; color: rgb(45, 55, 72); transform: scaleX(0.98);">2,357.9</div>
<div class="t " style="left: 977.8px; top: 740.86px; font-size: 10.5px; line-height: 15px; color: rgb(45, 55, 72); transform: scaleX(0.98);">18,097.3</div>
<div class="t " style="left: 1102.3px; top: 740.86px; font-size: 10.5px; line-height: 15px; color: rgb(43, 133, 192); transform: scaleX(1.044);">analytics:prod_stage.dbt_runstep</div>
<div class="t " style="left: 1300.2px; top: 740.56px; font-size: 10.5px; line-height: 15px; color: rgb(45, 55, 72); transform: scaleX(0.9851);">TRANSFORMING_2</div>
<div class="t " style="left: 1425.3px; top: 740.56px; font-size: 10.5px; line-height: 15px; color: rgb(45, 55, 72); transform: scaleX(0.9941);">Large</div>
<div class="row" style="top:763px;height:28px;"></div>
<div class="dot" style="top:770.3px;background:#2456a8"></div>
<div class="code" style="top:766.1px"></div>
<div class="t mono" style="left: 300.7px; top: 770.34px; font-size: 10px; line-height: 14px; color: rgb(43, 47, 56); transform: scaleX(1.0541);">create or replace tran…</div>
<div class="t " style="left: 470.4px; top: 769.06px; font-size: 10.5px; line-height: 15px; color: rgb(45, 55, 72); transform: scaleX(0.9497);">DBT_TRANSFORM_USER</div>
<div class="t " style="left: 603.9px; top: 769.06px; font-size: 10.5px; line-height: 15px; color: rgb(45, 55, 72); transform: scaleX(0.96);">49</div>
<div class="t " style="left: 728.5px; top: 769.06px; font-size: 10.5px; line-height: 15px; color: rgb(45, 55, 72); transform: scaleX(0.99);">344.1</div>
<div class="t " style="left: 853.2px; top: 769.06px; font-size: 10.5px; line-height: 15px; color: rgb(45, 55, 72); transform: scaleX(0.98);">816.0</div>
<div class="t " style="left: 977.8px; top: 769.06px; font-size: 10.5px; line-height: 15px; color: rgb(45, 55, 72); transform: scaleX(0.98);">16,862.7</div>
<div class="t " style="left: 1102.3px; top: 769.06px; font-size: 10.5px; line-height: 15px; color: rgb(43, 133, 192); transform: scaleX(1.0338);">analytics:prod_stage.job_executions</div>
<div class="t " style="left: 1300.2px; top: 768.76px; font-size: 10.5px; line-height: 15px; color: rgb(45, 55, 72); transform: scaleX(0.9851);">TRANSFORMING_2</div>
<div class="t " style="left: 1425.3px; top: 768.76px; font-size: 10.5px; line-height: 15px; color: rgb(45, 55, 72); transform: scaleX(0.9941);">Large</div>
<div class="row" style="top:791px;height:29px;"></div>
<div class="dot" style="top:798.5px;background:#d6428f"></div>
<div class="code" style="top:794.3px"></div>
<div class="t mono" style="left: 300.7px; top: 798.53px; font-size: 10px; line-height: 14px; color: rgb(43, 47, 56); transform: scaleX(1.0541);">merge into analytics.p…</div>
<div class="t " style="left: 470.4px; top: 797.26px; font-size: 10.5px; line-height: 15px; color: rgb(45, 55, 72); transform: scaleX(0.9497);">DBT_TRANSFORM_USER</div>
<div class="t " style="left: 603.9px; top: 797.26px; font-size: 10.5px; line-height: 15px; color: rgb(45, 55, 72); transform: scaleX(0.96);">139</div>
<div class="t " style="left: 728.5px; top: 797.26px; font-size: 10.5px; line-height: 15px; color: rgb(45, 55, 72); transform: scaleX(0.99);">114.0</div>
<div class="t " style="left: 853.2px; top: 797.26px; font-size: 10.5px; line-height: 15px; color: rgb(45, 55, 72); transform: scaleX(0.98);">2,387.2</div>
<div class="t " style="left: 977.8px; top: 797.26px; font-size: 10.5px; line-height: 15px; color: rgb(45, 55, 72); transform: scaleX(0.98);">15,841.6</div>
<div class="t " style="left: 1102.3px; top: 797.26px; font-size: 10.5px; line-height: 15px; color: rgb(43, 133, 192); transform: scaleX(1.0379);">analytics:prod_stage.dbt_runs</div>
<div class="t " style="left: 1300.2px; top: 796.96px; font-size: 10.5px; line-height: 15px; color: rgb(45, 55, 72); transform: scaleX(0.9851);">TRANSFORMING_2</div>
<div class="t " style="left: 1425.3px; top: 796.96px; font-size: 10.5px; line-height: 15px; color: rgb(45, 55, 72); transform: scaleX(0.9941);">Large</div>
<div class="row" style="top:820px;height:28px;"></div>
<div class="dot" style="top:826.7px;background:#5a9b35"></div>
<div class="code" style="top:822.5px"></div>
<div class="t mono" style="left: 300.7px; top: 826.74px; font-size: 10px; line-height: 14px; color: rgb(43, 47, 56); transform: scaleX(1.0541);">create or replace tran…</div>
<div class="t " style="left: 470.4px; top: 825.46px; font-size: 10.5px; line-height: 15px; color: rgb(45, 55, 72); transform: scaleX(0.9497);">DBT_TRANSFORM_USER</div>
<div class="t " style="left: 603.9px; top: 825.46px; font-size: 10.5px; line-height: 15px; color: rgb(45, 55, 72); transform: scaleX(0.96);">50</div>
<div class="t " style="left: 728.5px; top: 825.46px; font-size: 10.5px; line-height: 15px; color: rgb(45, 55, 72); transform: scaleX(0.99);">276.5</div>
<div class="t " style="left: 853.2px; top: 825.46px; font-size: 10.5px; line-height: 15px; color: rgb(45, 55, 72); transform: scaleX(0.98);">1,086.2</div>
<div class="t " style="left: 977.8px; top: 825.46px; font-size: 10.5px; line-height: 15px; color: rgb(45, 55, 72); transform: scaleX(0.98);">13,823.7</div>
<div class="t " style="left: 1102.3px; top: 825.46px; font-size: 10.5px; line-height: 15px; color: rgb(43, 133, 192); transform: scaleX(1.045);">analytics:prod_stage.catalog_fields</div>
<div class="t " style="left: 1300.2px; top: 825.16px; font-size: 10.5px; line-height: 15px; color: rgb(45, 55, 72); transform: scaleX(0.9851);">TRANSFORMING_2</div>
<div class="t " style="left: 1425.3px; top: 825.16px; font-size: 10.5px; line-height: 15px; color: rgb(45, 55, 72); transform: scaleX(0.9941);">Large</div>
</div>
</body></html>
